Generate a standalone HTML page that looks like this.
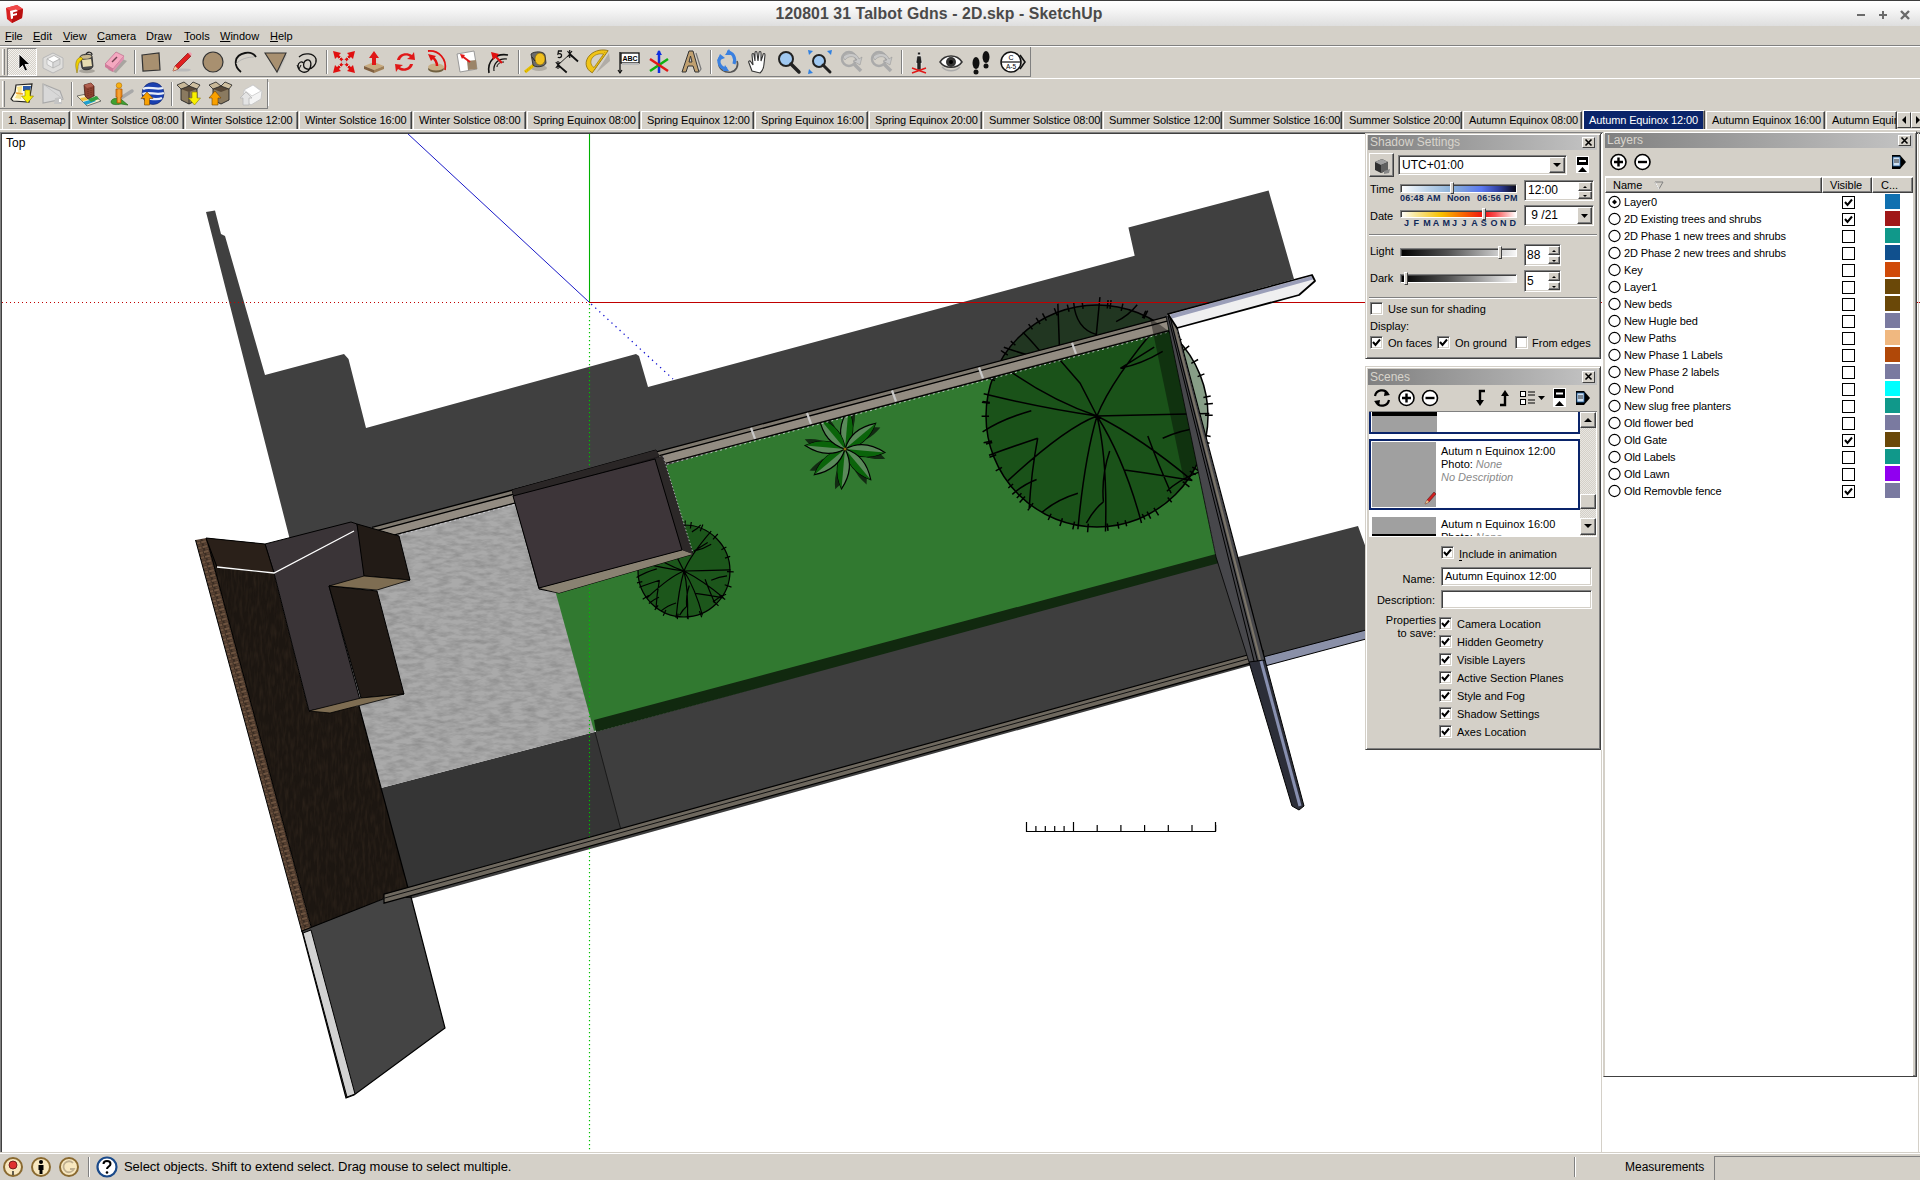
<!DOCTYPE html>
<html><head><meta charset="utf-8"><title>SketchUp</title>
<style>
*{margin:0;padding:0;box-sizing:border-box}
html,body{width:1920px;height:1180px;overflow:hidden;background:#d4d0c8;font-family:"Liberation Sans",sans-serif;font-size:11px;color:#000}
#root{position:relative;width:1920px;height:1180px;overflow:hidden}
.abs{position:absolute}
#titlebar{position:absolute;left:0;top:0;width:1920px;height:26px;background:linear-gradient(#ffffff 0%,#f4f4f4 40%,#dedede 100%);border-top:1px solid #3c3c3c}
#titlebar .t{position:absolute;left:0;width:1878px;top:4px;text-align:center;font-weight:bold;font-size:15.8px;color:#4a4a4a;letter-spacing:0.1px}
#menubar{position:absolute;left:0;top:26px;width:1920px;height:19px;background:#d4d0c8}
#menubar span{position:absolute;top:4px;font-size:11px}
#menubar u{text-decoration:underline;text-underline-offset:1px}
.sep1{position:absolute;left:0;top:45px;width:1920px;height:1px;background:#808080}
.sep1b{position:absolute;left:0;top:46px;width:1920px;height:1px;background:#fff}
.tb{position:absolute;background:#d4d0c8}
.grip{position:absolute;width:3px;border-left:1px solid #fff;border-right:1px solid #808080}
.vsep{position:absolute;width:2px;border-left:1px solid #808080;border-right:1px solid #fff}
.ico{position:absolute;width:26px;height:26px}
#tabs{position:absolute;left:0;top:110px;width:1920px;height:21px}
.tab{position:absolute;top:1px;height:18px;border-top:1px solid #fff;border-left:1px solid #fff;border-right:1px solid #404040;box-shadow:inset -1px 0 0 #808080;font-size:11px;line-height:16px;white-space:nowrap;overflow:hidden;padding-left:5px;background:#d4d0c8;letter-spacing:-0.12px}
.tab.act{background:#0a246a;color:#fff;top:0;height:20px;line-height:18px}
#viewport{position:absolute;left:0;top:132px;width:1920px;height:1020px;background:#fff;border-top:1px solid #808080;border-left:1px solid #808080;overflow:hidden}
.panel{position:absolute;background:#d4d0c8;border:1px solid #d4d0c8;box-shadow:inset -1px -1px 0 #404040, inset 1px 1px 0 #fff, inset -2px -2px 0 #808080}
.ptitle{position:absolute;height:16px;background:linear-gradient(90deg,#808080,#c0c0c0);color:#d4d0c8;font-size:12px;line-height:16px;padding-left:3px}
.pclose{position:absolute;width:14px;height:12px;background:#d4d0c8;border:1px solid;border-color:#fff #404040 #404040 #fff;font-size:11px;line-height:10px;text-align:center;font-weight:bold}
.inp{position:absolute;background:#fff;border:1px solid;border-color:#808080 #fff #fff #808080;box-shadow:inset 1px 1px 0 #404040}
.cb{position:absolute;width:13px;height:13px;background:#fff;border:1px solid;border-color:#808080 #fff #fff #808080;box-shadow:inset 1px 1px 0 #404040}
.lbl{position:absolute;font-size:11px;white-space:nowrap}
#status{position:absolute;left:0;top:1153px;width:1920px;height:27px;background:#d4d0c8;border-top:1px solid #fff}

</style></head><body>
<div id="root">
<div id="titlebar"><svg class="abs" style="left:3px;top:2px" width="22" height="22" viewBox="0 0 22 22"><path d="M3 5 L14 2 L20 6 L19 15 L9 20 L4 16 Z" fill="#d82020"/><path d="M3 5 L14 2 L20 6 L9 9Z" fill="#f04848"/><path d="M9 9 L20 6 L19 15 L9 20Z" fill="#b81010"/><path d="M7 8 L13 6.5 L15 8 L10 9.5 L10 11 L14 10 L14 12 L10 13 L10 15.5 L8 16Z" fill="#fff"/></svg><div class="t">120801 31 Talbot Gdns - 2D.skp - SketchUp</div><svg class="abs" style="left:1856px;top:8px" width="60" height="12" viewBox="0 0 60 12"><rect x="1" y="5" width="8" height="2" fill="#6a6a6a"/><rect x="23" y="5" width="8" height="2" fill="#6a6a6a"/><rect x="26" y="2" width="2" height="8" fill="#6a6a6a"/><path d="M45 2 L53 10 M53 2 L45 10" stroke="#6a6a6a" stroke-width="2.4"/></svg></div>
<div id="menubar">
<span style="left:5px"><u>F</u>ile</span>
<span style="left:33px"><u>E</u>dit</span>
<span style="left:63px"><u>V</u>iew</span>
<span style="left:97px"><u>C</u>amera</span>
<span style="left:146px">Dr<u>a</u>w</span>
<span style="left:184px"><u>T</u>ools</span>
<span style="left:220px"><u>W</u>indow</span>
<span style="left:270px"><u>H</u>elp</span>
</div><div class="sep1"></div><div class="sep1b"></div>
<div class="abs" style="left:0;top:47px;width:1031px;height:30px;border-right:1px solid #808080;border-bottom:1px solid #808080"></div>
<div class="abs" style="left:0;top:78px;width:1920px;height:1px;background:#fff"></div>
<div class="abs" style="left:0;top:79px;width:268px;height:30px;border-right:1px solid #808080;border-bottom:1px solid #808080"></div>
<div class="grip" style="left:2px;top:49px;height:26px"></div>
<div class="grip" style="left:2px;top:81px;height:26px"></div>
<div class="vsep" style="left:134px;top:50px;height:24px"></div>
<div class="vsep" style="left:326px;top:50px;height:24px"></div>
<div class="vsep" style="left:518px;top:50px;height:24px"></div>
<div class="vsep" style="left:710px;top:50px;height:24px"></div>
<div class="vsep" style="left:901px;top:50px;height:24px"></div>
<div class="vsep" style="left:71px;top:82px;height:24px"></div>
<div class="vsep" style="left:171px;top:82px;height:24px"></div>
<div class="vsep" style="left:267px;top:82px;height:24px"></div>
<div class="abs" style="left:7px;top:48px;width:30px;height:28px;border:1px solid;border-color:#808080 #fff #fff #808080;background-color:#d4d0c8;background-image:linear-gradient(45deg,#f4f2ee 25%,transparent 25%,transparent 75%,#f4f2ee 75%),linear-gradient(45deg,#f4f2ee 25%,transparent 25%,transparent 75%,#f4f2ee 75%);background-size:2px 2px;background-position:0 0,1px 1px"></div><svg class="abs" style="left:0;top:0" width="1040" height="112" viewBox="0 0 1040 112">
<g transform="translate(9,49)"><path d="M10 5 L10 20 L13.5 16.5 L16 22 L18.5 21 L16 15.5 L21 15.5 Z" fill="#000" stroke="#fff" stroke-width="0.8"/></g>
<g transform="translate(40,49)"><path d="M3 9 L13 4 L23 9 L23 19 L13 24 L3 19Z" fill="#e4e4e4" fill-opacity="0.7" stroke="#b8b8b8" stroke-width="1"/><path d="M7 10 L14 6.5 L20 10 L13 13.5Z" fill="#fff" stroke="#999" stroke-width="0.6"/><path d="M7 10 L13 13.5 L13 19 L7 15.5Z" fill="#f0f0f0" stroke="#aaa" stroke-width="0.6"/><path d="M13 13.5 L20 10 L20 15.5 L13 19Z" fill="#d8d8d8" stroke="#aaa" stroke-width="0.6"/></g>
<g transform="translate(71,49)"><ellipse cx="16" cy="22" rx="8" ry="2.2" fill="#a8a49c"/><path d="M9 8 C9 5 20 4 21 7 L22 17 C22 21 12 22 11 19Z" fill="#4a4a4a" stroke="#222" stroke-width="0.8"/><path d="M9.5 8 C10 6 20 5 20.5 7.5 C20 10 10 11 9.5 8Z" fill="#c8b890"/><path d="M11 11 L20 10 L21 17 L12 18Z" fill="#e8dcb0"/><path d="M10 8 C6 9 4 13 5 19 L6 24 L7 19 C7 14 9 12 12 10Z" fill="#f0d000" stroke="#806800" stroke-width="0.5"/><path d="M15 5 C17 2 21 3 21 6" fill="none" stroke="#222" stroke-width="1.2"/></g>
<g transform="translate(102,49)"><path d="M6 21 L16 8 L25 12 L14 24Z" fill="#a8a4a0"/><path d="M3 15 L14 3 L22 7 L11 20Z" fill="#f4a8c0" stroke="#b06080" stroke-width="0.6"/><path d="M3 15 L11 20 L11 23 L3 18Z" fill="#d07898"/><path d="M11 20 L22 7 L22 10 L11 23Z" fill="#e090b0"/><path d="M10 13 L15 8" stroke="#704050" stroke-width="1.5"/></g>
<g transform="translate(138,49)"><path d="M4 6 L21 4 L22 21 L5 22 Z" fill="#a89070" stroke="#333" stroke-width="1.2"/></g>
<g transform="translate(169,49)"><ellipse cx="13" cy="21" rx="9" ry="1.6" fill="#bbb"/><path d="M4 22 L6 17 L19 4 L22 7 L9 20 Z" fill="#e02020" stroke="#801010" stroke-width="0.7"/><path d="M4 22 L6 17 L9 20 Z" fill="#f0d0a0"/><path d="M19 4 L22 7 L23 5 L21 3Z" fill="#f0a0b0"/></g>
<g transform="translate(200,49)"><circle cx="13" cy="13" r="10" fill="#a89070" stroke="#333" stroke-width="1.2"/></g>
<g transform="translate(232,49)"><path d="M9 23 C1 17 2 6 13 4 C18 3 22 5 24 8" fill="none" stroke="#111" stroke-width="1.8"/><path d="M4 15 C8 10 16 8 22 8" fill="none" stroke="#aaa" stroke-width="0.8"/></g>
<g transform="translate(263,49)"><path d="M5 6 L24 6 L16 23Z" fill="#b0b0b0" fill-opacity="0.5"/><path d="M2 4 L23 4 L14 23 Z" fill="#a89070" stroke="#333" stroke-width="1.1"/></g>
<g transform="translate(294,49)"><path d="M5 8 C10 3 20 4 22 10 C23 15 18 21 13 20 C8 19 9 12 13 11 C18 10 18 18 14 22 C10 25 4 22 4 17 C4 13 8 12 9 14" fill="none" stroke="#111" stroke-width="1.3"/><path d="M3 16 L5 20 L7 16" fill="none" stroke="#111" stroke-width="1"/></g>
<g transform="translate(331,49)"><path d="M13 13 L6 6 M13 13 L20 6 M13 13 L6 20 M13 13 L20 20" stroke="#e01010" stroke-width="2.5"/><path d="M2 2 L10 4 L4 10Z M24 2 L22 10 L16 4Z M2 24 L4 16 L10 22Z M24 24 L16 22 L22 16Z" fill="#e01010"/><circle cx="13" cy="13" r="2.5" fill="#c8c8c8"/><path d="M10 8 L8 10 M16 8 L18 10 M10 18 L8 16 M16 18 L18 16" stroke="#d0d0d0" stroke-width="1"/></g>
<g transform="translate(361,49)"><path d="M3 17 L13 13 L23 17 L13 21Z" fill="#c8ac80"/><path d="M3 17 L13 21 L13 24 L3 20Z" fill="#806040"/><path d="M13 21 L23 17 L23 20 L13 24Z" fill="#a08058"/><path d="M13 2 L18 9 L15 9 L15 16 L11 16 L11 9 L8 9Z" fill="#e01818"/></g>
<g transform="translate(392,49)"><path d="M5 11 C6 5 14 2 20 6 L22 3 L23 11 L15 10 L18 8 C14 5 9 7 8 11Z" fill="#e01818"/><path d="M21 15 C20 21 12 24 6 20 L4 23 L3 15 L11 16 L8 18 C12 21 17 19 18 15Z" fill="#e01818"/></g>
<g transform="translate(423,49)"><ellipse cx="13" cy="20" rx="8" ry="3.5" fill="#706040"/><ellipse cx="13" cy="18" rx="8" ry="3.5" fill="#c8b088"/><path d="M5 2 C16 1 24 10 22 21" fill="none" stroke="#e01010" stroke-width="1.8"/><path d="M14 17 C14 13 12 10 9 8" fill="none" stroke="#e01010" stroke-width="2.6"/><path d="M5 5 L13 7 L8 12Z" fill="#e01010"/></g>
<g transform="translate(454,49)"><path d="M3 5 L20 2 L23 20 L6 23Z" fill="#fff" stroke="#999" stroke-width="1"/><path d="M13 12 L22 11 L23 20 L14 21Z" fill="#9a8468"/><path d="M16 13 L8 7" stroke="#e01818" stroke-width="2"/><path d="M6 5 L11 6 L8 10Z" fill="#e01818"/></g>
<g transform="translate(485,49)"><path d="M4 24 C2 12 10 4 23 6" fill="none" stroke="#111" stroke-width="1.6"/><path d="M9 22 C8 15 13 9 22 10" fill="none" stroke="#111" stroke-width="1.2"/><path d="M12 18 C12 15 15 13 19 13" fill="none" stroke="#111" stroke-width="1"/><path d="M17 14 L9 6" stroke="#e01010" stroke-width="2.2"/><path d="M6 3 L14 5 L8 11Z" fill="#e01010"/></g>
<g transform="translate(522,49)"><ellipse cx="17" cy="19" rx="8" ry="3" fill="#b0aca4"/><path d="M3 23 L13 15" stroke="#e8c000" stroke-width="3.2"/><path d="M3 23 L13 15" stroke="#806000" stroke-width="0.5" stroke-dasharray="1 2"/><path d="M9 5 C12 2 22 2 23 6 L24 14 C23 18 13 19 11 16Z" fill="#6a6a6a" stroke="#222" stroke-width="0.8"/><ellipse cx="18" cy="10" rx="5" ry="6" fill="#f0c020" stroke="#806000" stroke-width="0.6"/><path d="M10 8 L13 12" stroke="#222" stroke-width="1"/></g>
<g transform="translate(553,49)"><path d="M5 16 L17 5" stroke="#111" stroke-width="0.9"/><path d="M16.7 5 L25 12.5 M5 15.8 L13.7 23.5" stroke="#111" stroke-width="1.8"/><path d="M14.5 2 L19 8 M19 2 L14.5 8 M16.7 1 L16.7 9" stroke="#111" stroke-width="1.2"/><path d="M2.8 13 L7.3 19 M7.3 13 L2.8 19 M5 12 L5 20" stroke="#111" stroke-width="1.2"/><path d="M9 2 L5.5 2 L5 5 C7 4 9 5 8.5 7 C8 9 5.5 9 5 8" fill="none" stroke="#111" stroke-width="1.3"/></g>
<g transform="translate(584,49)"><path d="M25 4 L26 12 L12 24 Z" fill="#b0aca6"/><path d="M24.2 1.7 L8.3 23.8 C1 20 0 12 6 6 C11 1 19 0 24.2 1.7Z" fill="#f0c418" stroke="#8a6a00" stroke-width="0.8"/><path d="M19.5 5 L10 18.5 C6 16 6 11 9 8 C12 5 16 4.5 19.5 5Z" fill="#d4d0c8" stroke="#8a6a00" stroke-width="0.6"/><path d="M21 3 L10.5 21" stroke="#a08000" stroke-width="0.6" stroke-dasharray="1 1.5"/></g>
<g transform="translate(616,49)"><path d="M4 3 L4 24" stroke="#111" stroke-width="1.3"/><path d="M2 21 L4 24 L6 21" fill="none" stroke="#111" stroke-width="1.2"/><rect x="5" y="4" width="18" height="10" fill="#fff" stroke="#111" stroke-width="1.3"/><text x="14" y="12.3" font-size="7" font-weight="bold" text-anchor="middle" font-family="Liberation Sans">ABC</text><rect x="6" y="14" width="17" height="2" fill="#bbb"/></g>
<g transform="translate(646,49)"><path d="M13 2 L13 24" stroke="#1030e0" stroke-width="2.5"/><path d="M4 22 L22 10" stroke="#10b010" stroke-width="2.5"/><path d="M4 10 L22 22" stroke="#e01818" stroke-width="2.5"/><path d="M10 6 L13 1 L16 6Z" fill="#1030e0"/></g>
<g transform="translate(677,49)"><path d="M5 23 L12 2 L16 2 L22 23 L18 23 L16 17 L11 17 L9 23Z M12 13 L15 13 L13.5 7Z" fill="#c0a070" stroke="#333" stroke-width="1" fill-rule="evenodd"/><path d="M22 23 L24 20 L19 4" fill="none" stroke="#777" stroke-width="1.2"/></g>
<g transform="translate(715,49)"><path d="M4 14 C3 20 10 24 16 23 C21 22 24 17 22 12" fill="none" stroke="#555" stroke-width="1.6"/><path d="M6 8 C2 12 4 19 12 20" fill="none" stroke="#3a80e0" stroke-width="3.2"/><path d="M12 3 C18 3 21 9 19 15" fill="none" stroke="#3a80e0" stroke-width="3.2"/><path d="M2 12 L5 5 L10 9Z" fill="#3a80e0"/><path d="M14 0 L17 6 L10 6Z" fill="#3a80e0"/><path d="M10 16 L14 22 L8 22Z" fill="#3a80e0"/></g>
<g transform="translate(745,49)"><path d="M7 22 L4 14 C3 12 5 11 6 13 L8 16 L7 6 C7 4 9 4 9 6 L10 12 L10 4 C10 2 12 2 12 4 L13 12 L14 4 C14 2 16 2 16 4 L16 12 L18 6 C18 4 20 4 20 6 L19 15 C19 19 17 22 15 24Z" fill="#fff" stroke="#333" stroke-width="1.1"/></g>
<g transform="translate(776,49)"><circle cx="10" cy="10" r="7" fill="#a0c8f0" stroke="#222" stroke-width="2"/><path d="M15 15 L23 23" stroke="#222" stroke-width="3.5" stroke-linecap="round"/></g>
<g transform="translate(807,49)"><circle cx="12" cy="12" r="6" fill="#a0c8f0" stroke="#222" stroke-width="2"/><path d="M16 16 L23 23" stroke="#222" stroke-width="3" stroke-linecap="round"/><path d="M1 1 L6 2 L2 6Z M25 1 L24 6 L20 2Z M1 25 L2 20 L6 24Z" fill="#3080e0"/></g>
<g transform="translate(839,49)"><circle cx="10" cy="10" r="7" fill="none" stroke="#aaa" stroke-width="2.5"/><path d="M15 15 L22 22" stroke="#aaa" stroke-width="3.5"/><path d="M4 8 C8 3 18 3 20 10 L23 8 L21 16 L14 12 L18 11 C15 6 9 7 6 11Z" fill="#c8c8c8" stroke="#999" stroke-width="0.6"/></g>
<g transform="translate(869,49)"><circle cx="10" cy="10" r="7" fill="none" stroke="#aaa" stroke-width="2.5"/><path d="M15 15 L22 22" stroke="#aaa" stroke-width="3.5"/><path d="M4 8 C8 3 18 3 20 10 L23 8 L21 16 L14 12 L18 11 C15 6 9 7 6 11Z" fill="#c8c8c8" stroke="#999" stroke-width="0.6"/></g>
<g transform="translate(907,49)"><path d="M12 3 C14 3 14 6 12 6 C10 6 10 3 12 3Z M10 7 L14 7 L15 14 L14 14 L14 21 L10 21 L10 14 L9 14Z" fill="#222" stroke="#fff" stroke-width="0.5"/><path d="M5 19 L19 24 M5 24 L19 19" stroke="#e01818" stroke-width="1.4"/></g>
<g transform="translate(938,49)"><path d="M2 13 C7 5 19 5 24 13 C19 20 7 20 2 13Z" fill="#fff" stroke="#333" stroke-width="1.5"/><circle cx="13" cy="13" r="5" fill="#333"/><circle cx="13" cy="13" r="2" fill="#000"/><path d="M4 18 C9 23 17 23 22 18" fill="none" stroke="#aaa" stroke-width="1.5"/></g>
<g transform="translate(968,49)"><ellipse cx="8" cy="14" rx="3.5" ry="6" fill="#111"/><ellipse cx="8" cy="23" rx="2.5" ry="2.5" fill="#111"/><ellipse cx="18" cy="8" rx="3.5" ry="6" fill="#111"/><ellipse cx="18" cy="17" rx="2.5" ry="2.5" fill="#111"/></g>
<g transform="translate(999,49)"><circle cx="12" cy="13" r="10" fill="#fff" stroke="#111" stroke-width="1.5"/><path d="M2 13 L22 13" stroke="#111" stroke-width="1.2"/><path d="M21 6 L26 13 L21 20" fill="none" stroke="#111" stroke-width="1.6"/><text x="12" y="11" font-size="7" text-anchor="middle" font-family="Liberation Sans">C</text><text x="12" y="20" font-size="6.5" text-anchor="middle" font-family="Liberation Sans">A-5</text></g>
<g transform="translate(9,81)"><path d="M7 4 L23 3 L22 9 L20 21 L4 20 L2 18 L6 11Z" fill="#fffbe8" stroke="#222" stroke-width="1.2"/><path d="M8 6 L13 5 L12 18 L6 17 L9 11Z" fill="#f8e070" fill-opacity="0.8"/><path d="M7 12 L14 13" stroke="#f0a030" stroke-width="1.4"/><path d="M14 5 L22 5 L21 10 L14 10Z" fill="#2a5aa8"/><path d="M16 9 L21 9 L21 15 L24.5 15 L18.5 22 L12.5 15 L16 15Z" fill="#f8f000" stroke="#8a7a00" stroke-width="0.6"/></g>
<g transform="translate(40,81)"><path d="M3 3 L20 10 L23 18 L3 22 Z" fill="#d8d8d8" stroke="#a8a8a8" stroke-width="1.1"/><path d="M3 3 L23 18" stroke="#c0c0c0" stroke-width="0.8"/><path d="M15 17 L21 16 L22 23 L14 23Z" fill="#c4c4c4"/><path d="M19 18 L21 18 L21 21 L19 21Z" fill="#fff"/></g>
<g transform="translate(76,81)"><path d="M1 15 L15 12 L25 20 L11 25Z" fill="#f8f0d0" stroke="#555" stroke-width="0.8"/><path d="M4 17 L10 16 L12 19 L6 20Z" fill="#f0c040"/><path d="M7 21 L17 18 L20 20 L10 24Z" fill="#20a0d0"/><path d="M12 18 L21 15 L23 18 L15 21Z" fill="#30a040"/><path d="M8 4 L15 2 L18 5 L18 15 L12 18 L9 15Z" fill="#8a4030" stroke="#3a1008" stroke-width="0.7"/><path d="M8 4 L15 2 L18 5 L11 7Z" fill="#b06050"/><path d="M12 8 L12 16 M15 7 L15 15" stroke="#5a2010" stroke-width="0.6" stroke-dasharray="1 1"/></g>
<g transform="translate(107,81)"><path d="M14 17 L25 10" stroke="#a8a8a8" stroke-width="3.5" stroke-linecap="round"/><path d="M4 21 C4 17 12 16 15 19 L21 24 L14 23 C10 24 4 24 4 21Z" fill="#40a030" stroke="#206010" stroke-width="0.6"/><circle cx="12" cy="4.5" r="2.8" fill="#f8b010" stroke="#a06000" stroke-width="0.5"/><path d="M9 8 L15 8 L15 16 L14 16 L14 22 L10 22 L10 16 L9 16Z" fill="#f09020" stroke="#a05000" stroke-width="0.7"/><path d="M12 8 L12 21" stroke="#f8c060" stroke-width="0.8"/></g>
<g transform="translate(139,81)"><circle cx="14" cy="12.5" r="11" fill="#1a40b0" stroke="#102060" stroke-width="0.6"/><path d="M4 8 C9 5 17 9 24 7 M3.5 13 C10 10 17 15 25 12 M6 19 C11 16 17 20 23 17" fill="none" stroke="#e8eef8" stroke-width="2.3"/><path d="M8 11 L14 17.5 L10.5 17.5 L10.5 24 L5.5 24 L5.5 17.5 L2 17.5Z" fill="#f8a000" stroke="#704000" stroke-width="0.6"/></g>
<g transform="translate(176,81)"><path d="M5 8 L13 5 L21 8 L21 19 L13 23 L5 19Z" fill="#8a7a60" stroke="#222" stroke-width="0.9"/><path d="M5 8 L13 11 L21 8 L13 5Z" fill="#5a4a38"/><path d="M5 8 L1 4 L8 1 L13 5Z" fill="#c8b898" stroke="#222" stroke-width="0.8"/><path d="M13 5 L17 1 L24 4 L21 8Z" fill="#d0c0a0" stroke="#222" stroke-width="0.8"/><path d="M13 11 L13 23" stroke="#222" stroke-width="0.8"/><path d="M16 11 L21 11 L21 17 L24.5 17 L18.5 24 L12.5 17 L16 17Z" fill="#f8f000" stroke="#8a7a00" stroke-width="0.6"/></g>
<g transform="translate(207,81)"><path d="M6 8 L14 5 L22 8 L22 19 L14 23 L6 19Z" fill="#8a7a60" stroke="#222" stroke-width="0.9"/><path d="M6 8 L14 11 L22 8 L14 5Z" fill="#5a4a38"/><path d="M6 8 L2 4 L9 1 L14 5Z" fill="#c8b898" stroke="#222" stroke-width="0.8"/><path d="M14 5 L18 1 L25 4 L22 8Z" fill="#d0c0a0" stroke="#222" stroke-width="0.8"/><path d="M8 10 L14 17 L11 17 L11 24 L5 24 L5 17 L2 17Z" fill="#f8a000" stroke="#704000" stroke-width="0.6"/></g>
<g transform="translate(237,81)"><path d="M7 9 L16 4 L25 10 L24 18 L14 24 L6 19Z" fill="#f4f4f4" stroke="#c8c8c8" stroke-width="1"/><path d="M7 9 L16 4 L24 10 L15 15Z" fill="#fff" stroke="#c8c8c8" stroke-width="0.8"/><path d="M9 11 L15 17 L12 17 L12 24 L6 24 L6 17 L3 17Z" fill="#e4e4e4" stroke="#b8b8b8" stroke-width="0.8"/></g>
</svg><div id="tabs">
<div class="tab" style="left:2px;width:68px">1. Basemap</div>
<div class="tab" style="left:71px;width:113px">Winter Solstice 08:00</div>
<div class="tab" style="left:185px;width:113px">Winter Solstice 12:00</div>
<div class="tab" style="left:299px;width:113px">Winter Solstice 16:00</div>
<div class="tab" style="left:413px;width:113px">Winter Solstice 08:00</div>
<div class="tab" style="left:527px;width:113px">Spring Equinox 08:00</div>
<div class="tab" style="left:641px;width:113px">Spring Equinox 12:00</div>
<div class="tab" style="left:755px;width:113px">Spring Equinox 16:00</div>
<div class="tab" style="left:869px;width:113px">Spring Equinox 20:00</div>
<div class="tab" style="left:983px;width:119px">Summer Solstice 08:00</div>
<div class="tab" style="left:1103px;width:119px">Summer Solstice 12:00</div>
<div class="tab" style="left:1223px;width:119px">Summer Solstice 16:00</div>
<div class="tab" style="left:1343px;width:119px">Summer Solstice 20:00</div>
<div class="tab" style="left:1463px;width:119px">Autumn Equinox 08:00</div>
<div class="tab act" style="left:1583px;width:122px">Autumn Equinox 12:00</div>
<div class="tab" style="left:1706px;width:119px">Autumn Equinox 16:00</div>
<div class="tab" style="left:1826px;width:71px">Autumn Equinox 20:00</div>
<div class="abs" style="left:1897px;top:2px;width:14px;height:16px;border:1px solid;border-color:#fff #404040 #404040 #fff;background:#d4d0c8"><svg width="12" height="14"><path d="M4 7 L8 3 L8 11Z" fill="#000"/></svg></div>
<div class="abs" style="left:1911px;top:2px;width:14px;height:16px;border:1px solid;border-color:#fff #404040 #404040 #fff;background:#d4d0c8"><svg width="12" height="14"><path d="M4 3 L8 7 L4 11Z" fill="#000"/></svg></div>
<div class="abs" style="left:0;top:19px;width:1920px;height:1px;background:#fff"></div>
</div>
<div id="viewport"><svg style="position:absolute;left:-1px;top:-133px" width="1920" height="1180" viewBox="0 0 1920 1180" shape-rendering="geometricPrecision">
<defs>
<filter id="noise" x="0" y="0" width="100%" height="100%" color-interpolation-filters="sRGB"><feTurbulence type="fractalNoise" baseFrequency="0.08 0.25" numOctaves="3" seed="4" result="n"/><feColorMatrix in="n" type="matrix" values="0 0 0 0 0  0 0 0 0 0  0 0 0 0 0  0.3 0 0 0 -0.105" result="a"/><feComposite in="a" in2="SourceGraphic" operator="in" result="b"/><feMerge><feMergeNode in="SourceGraphic"/><feMergeNode in="b"/></feMerge></filter>
<filter id="noise2" x="0" y="0" width="100%" height="100%" color-interpolation-filters="sRGB"><feTurbulence type="fractalNoise" baseFrequency="0.35 0.08" numOctaves="2" seed="9" result="n"/><feColorMatrix in="n" type="matrix" values="0 0 0 0 0.35  0 0 0 0 0.27  0 0 0 0 0.2  0.5 0 0 0 -0.2" result="a"/><feComposite in="a" in2="SourceGraphic" operator="in" result="b"/><feMerge><feMergeNode in="SourceGraphic"/><feMergeNode in="b"/></feMerge></filter>
<pattern id="brick" width="6" height="5" patternUnits="userSpaceOnUse" patternTransform="rotate(-15)"><rect width="6" height="5" fill="#3a2c22"/><rect x="0" y="0" width="5" height="2" fill="#6e5440"/><rect x="2" y="2.5" width="4" height="2" fill="#5c4434"/></pattern>
</defs>
<polygon points="206,212 215,210.5 221,234 225,236 265,375 344,354 348.5,359 366,428 636,354 639,356 648,387 1134.7,255.8 1128.4,227.6 1268.6,190.6 1294,279 1168,314 1160,340 700,475 360,565 290,540" fill="#404040"/>
<polygon points="370,792 595,732 1216,562 1238,557 1358,526 1366,548 1366,634 1263,662 392,904 380,880" fill="#3e3e3e"/>
<polygon points="381,788 595,732 621,830 405,893" fill="#353535"/>
<line x1="595" y1="732" x2="621" y2="830" stroke="#1a1a1a" stroke-width="1"/>
<polygon points="355,545 512,492 539,589 559,593 595,732 381,788 340,640" fill="#aaaaaa" filter="url(#noise)"/>
<polygon points="650,470 1168,320 1216,557 594,731 555,590" fill="#317930"/>
<polygon points="594,720 1216,554 1219,563 596,732" fill="#11290f"/>
<circle cx="684" cy="571" r="46" fill="#1c561b" stroke="#000" stroke-width="1.2"/>
<clipPath id="c5_684"><circle cx="684" cy="571" r="54"/></clipPath>
<path d="M684.0 571.0 L702.4 570.6 L721.3 570.1 L730.5 569.9 M684.0 571.0 Q662.1 567.9 637.0 561.8 M684.0 571.0 L677.0 557.4 L668.6 547.7 L667.8 524.0 M684.0 571.0 Q690.1 555.6 711.2 531.1 M684.0 571.0 Q664.7 564.4 646.3 551.2 M684.0 571.0 Q670.8 575.8 647.1 597.8 M684.0 571.0 Q678.7 589.0 676.1 618.0 M684.0 571.0 Q688.4 589.0 687.5 618.8 M684.0 571.0 Q695.4 589.0 702.4 615.3 M684.0 571.0 Q702.4 580.2 723.5 597.8 M683.6 539.0 Q684.4 529.3 685.3 520.5 M659.4 580.2 Q656.8 594.3 655.9 609.2 M639.2 587.2 Q648.9 583.7 659.4 580.2 M648.9 603.5 Q653.3 599.5 659.0 597.3 M661.2 610.9 Q667.3 605.7 676.1 603.0 M689.3 585.5 Q685.8 596.0 686.6 606.6 M695.4 593.4 Q708.6 595.1 723.5 597.8 M705.1 579.3 Q708.6 589.0 714.7 603.0 M636.6 577.6 Q644.5 572.3 656.8 568.8 M645.4 542.5 Q657.7 546.9 666.4 548.6 M674.3 524.0 Q675.2 534.6 683.6 537.2 M691.9 531.9 Q697.2 529.3 700.7 524.9 M707.7 542.5 Q700.7 546.9 693.7 551.2 M693.7 551.2 Q702.4 549.5 711.2 544.2 M679.6 615.3 Q683.1 609.2 686.6 606.6 M711.2 580.2 Q719.1 576.7 727.0 575.8 M713.0 602.2 Q717.4 597.8 726.1 594.3 M653.3 536.3 Q658.5 541.6 664.7 549.5 M727.0 571.7 L733.7 571.9 M724.7 584.8 L731.5 587.1 M719.4 595.4 L725.2 599.5 M714.2 601.6 L718.5 605.9 M699.4 611.1 L701.7 617.2 M687.7 613.8 L688.2 619.2 M678.1 613.6 L677.3 619.2 M665.9 610.0 L663.2 615.7 M658.1 605.3 L654.8 609.8 M648.6 595.4 L642.7 599.3 M642.3 581.6 L637.0 582.9 M641.0 569.2 L635.6 569.0 M642.9 558.2 L637.8 556.6 M646.3 550.3 L640.2 547.0 M654.5 539.7 L650.7 535.6 M668.8 530.8 L666.4 524.3 M676.6 528.6 L675.4 521.6 M690.4 528.5 L691.3 522.0 M700.2 531.2 L702.9 524.6 M713.0 539.3 L717.8 534.0 M721.4 549.8 L726.4 546.9 M725.0 558.1 L730.2 556.4" fill="none" stroke="#000" stroke-width="1.2" clip-path="url(#c5_684)"/>
<clipPath id="c_lawn"><polygon points="650,463 1168,318 1216,557 594,731 555,590"/></clipPath>
<clipPath id="c_shadow"><polygon points="900,200 1300,200 1168,316 1168,318 650,458 650,300"/></clipPath>
<clipPath id="c_right"><polygon points="1173,314 1400,250 1400,700 1265,660"/></clipPath>
<clipPath id="c_wallsh"><polygon points="1150,320 1168,316 1249,662 1222,662"/></clipPath>
<g clip-path="url(#c_lawn)"><circle cx="1097" cy="416" r="111" fill="#1a5219" stroke="#000" stroke-width="1.5"/>
<clipPath id="c11_1097"><circle cx="1097" cy="416" r="119"/></clipPath>
<path d="M1097.0 416.0 L1141.5 414.9 L1187.0 413.9 L1209.3 413.5 M1097.0 416.0 Q1044.0 408.6 983.7 393.8 M1097.0 416.0 L1080.1 383.2 L1059.9 359.9 L1057.8 302.7 M1097.0 416.0 Q1111.8 378.9 1162.7 319.6 M1097.0 416.0 Q1050.4 400.1 1005.9 368.3 M1097.0 416.0 Q1065.2 427.7 1008.0 480.6 M1097.0 416.0 Q1084.3 459.4 1077.9 529.3 M1097.0 416.0 Q1107.6 459.4 1105.5 531.4 M1097.0 416.0 Q1124.5 459.4 1141.5 523.0 M1097.0 416.0 Q1141.5 438.2 1192.3 480.6 M1095.9 338.7 Q1098.1 315.4 1100.2 294.2 M1037.7 438.2 Q1031.3 472.1 1029.2 508.1 M989.0 455.2 Q1012.3 446.7 1037.7 438.2 M1012.3 494.4 Q1022.9 484.8 1036.6 479.5 M1041.9 512.4 Q1056.8 499.7 1077.9 493.3 M1109.7 451.0 Q1101.2 476.4 1103.4 501.8 M1124.5 470.0 Q1156.3 474.3 1192.3 480.6 M1147.8 436.1 Q1156.3 459.4 1171.1 493.3 M982.6 431.9 Q1001.7 419.2 1031.3 410.7 M1003.8 347.2 Q1033.5 357.7 1054.6 362.0 M1073.7 302.7 Q1075.8 328.1 1095.9 334.4 M1116.1 321.7 Q1128.8 315.4 1137.2 304.8 M1154.2 347.2 Q1137.2 357.7 1120.3 368.3 M1120.3 368.3 Q1141.5 364.1 1162.7 351.4 M1086.4 523.0 Q1094.9 508.1 1103.4 501.8 M1162.7 438.2 Q1181.7 429.8 1200.8 427.7 M1166.9 491.2 Q1177.5 480.6 1198.7 472.1 M1022.9 332.3 Q1035.6 345.0 1050.4 364.1 M1205.0 415.3 L1212.7 415.2 M1203.3 435.1 L1210.6 436.4 M1202.0 441.5 L1209.5 443.3 M1199.8 449.1 L1207.0 451.4 M1192.2 467.1 L1199.6 471.0 M1189.8 471.2 L1195.8 474.7 M1182.7 481.7 L1189.4 486.9 M1167.7 497.6 L1171.7 502.3 M1153.9 507.8 L1158.6 515.4 M1147.1 511.7 L1150.7 518.6 M1142.3 514.0 L1144.9 519.5 M1125.1 520.3 L1126.7 526.3 M1117.5 522.0 L1118.8 528.6 M1107.3 523.5 L1108.0 530.9 M1088.3 523.6 L1087.6 532.2 M1074.5 521.6 L1072.8 529.4 M1062.4 518.3 L1059.9 525.9 M1051.1 513.8 L1048.2 520.0 M1033.1 503.1 L1027.8 510.4 M1025.0 496.5 L1019.6 502.6 M1021.5 493.2 L1016.8 498.0 M1013.1 484.0 L1008.3 488.0 M1002.0 467.4 L995.7 470.9 M996.2 454.7 L989.5 457.3 M991.9 440.9 L983.6 442.8 M992.3 442.5 L985.9 444.1 M989.0 416.2 L981.6 416.2 M989.9 402.4 L982.7 401.5 M989.8 403.3 L981.9 402.3 M995.0 380.5 L988.6 378.2 M995.8 378.2 L989.3 375.8 M1007.8 355.2 L1000.9 350.5 M1007.8 355.1 L1002.2 351.3 M1015.4 345.2 L1010.8 341.1 M1032.5 329.4 L1028.6 324.1 M1040.1 324.2 L1036.2 317.9 M1046.4 320.6 L1042.5 313.3 M1057.2 315.6 L1054.3 308.2 M1069.1 311.7 L1067.3 304.6 M1083.1 308.9 L1082.2 302.1 M1107.3 308.5 L1108.1 300.1 M1110.0 308.8 L1111.1 300.2 M1121.2 310.8 L1122.9 303.7 M1142.5 318.0 L1145.8 310.8 M1143.8 318.7 L1147.7 310.6 M1156.4 325.8 L1160.1 320.1 M1172.9 339.1 L1177.8 334.2 M1176.8 343.2 L1181.4 339.0 M1183.0 350.6 L1189.2 345.9 M1191.3 363.3 L1198.1 359.5 M1197.6 376.6 L1204.4 373.9 M1203.4 397.4 L1210.7 396.1 M1204.4 404.3 L1212.9 403.4" fill="none" stroke="#000" stroke-width="1.5" clip-path="url(#c11_1097)"/></g>
<g clip-path="url(#c_shadow)"><circle cx="1097" cy="416" r="111" fill="#213621" stroke="#000" stroke-width="1.5"/>
<clipPath id="c11_1097"><circle cx="1097" cy="416" r="119"/></clipPath>
<path d="M1097.0 416.0 L1141.5 414.9 L1187.0 413.9 L1209.3 413.5 M1097.0 416.0 Q1044.0 408.6 983.7 393.8 M1097.0 416.0 L1080.1 383.2 L1059.9 359.9 L1057.8 302.7 M1097.0 416.0 Q1111.8 378.9 1162.7 319.6 M1097.0 416.0 Q1050.4 400.1 1005.9 368.3 M1097.0 416.0 Q1065.2 427.7 1008.0 480.6 M1097.0 416.0 Q1084.3 459.4 1077.9 529.3 M1097.0 416.0 Q1107.6 459.4 1105.5 531.4 M1097.0 416.0 Q1124.5 459.4 1141.5 523.0 M1097.0 416.0 Q1141.5 438.2 1192.3 480.6 M1095.9 338.7 Q1098.1 315.4 1100.2 294.2 M1037.7 438.2 Q1031.3 472.1 1029.2 508.1 M989.0 455.2 Q1012.3 446.7 1037.7 438.2 M1012.3 494.4 Q1022.9 484.8 1036.6 479.5 M1041.9 512.4 Q1056.8 499.7 1077.9 493.3 M1109.7 451.0 Q1101.2 476.4 1103.4 501.8 M1124.5 470.0 Q1156.3 474.3 1192.3 480.6 M1147.8 436.1 Q1156.3 459.4 1171.1 493.3 M982.6 431.9 Q1001.7 419.2 1031.3 410.7 M1003.8 347.2 Q1033.5 357.7 1054.6 362.0 M1073.7 302.7 Q1075.8 328.1 1095.9 334.4 M1116.1 321.7 Q1128.8 315.4 1137.2 304.8 M1154.2 347.2 Q1137.2 357.7 1120.3 368.3 M1120.3 368.3 Q1141.5 364.1 1162.7 351.4 M1086.4 523.0 Q1094.9 508.1 1103.4 501.8 M1162.7 438.2 Q1181.7 429.8 1200.8 427.7 M1166.9 491.2 Q1177.5 480.6 1198.7 472.1 M1022.9 332.3 Q1035.6 345.0 1050.4 364.1 M1205.0 415.3 L1212.7 415.2 M1203.3 435.1 L1210.6 436.4 M1202.0 441.5 L1209.5 443.3 M1199.8 449.1 L1207.0 451.4 M1192.2 467.1 L1199.6 471.0 M1189.8 471.2 L1195.8 474.7 M1182.7 481.7 L1189.4 486.9 M1167.7 497.6 L1171.7 502.3 M1153.9 507.8 L1158.6 515.4 M1147.1 511.7 L1150.7 518.6 M1142.3 514.0 L1144.9 519.5 M1125.1 520.3 L1126.7 526.3 M1117.5 522.0 L1118.8 528.6 M1107.3 523.5 L1108.0 530.9 M1088.3 523.6 L1087.6 532.2 M1074.5 521.6 L1072.8 529.4 M1062.4 518.3 L1059.9 525.9 M1051.1 513.8 L1048.2 520.0 M1033.1 503.1 L1027.8 510.4 M1025.0 496.5 L1019.6 502.6 M1021.5 493.2 L1016.8 498.0 M1013.1 484.0 L1008.3 488.0 M1002.0 467.4 L995.7 470.9 M996.2 454.7 L989.5 457.3 M991.9 440.9 L983.6 442.8 M992.3 442.5 L985.9 444.1 M989.0 416.2 L981.6 416.2 M989.9 402.4 L982.7 401.5 M989.8 403.3 L981.9 402.3 M995.0 380.5 L988.6 378.2 M995.8 378.2 L989.3 375.8 M1007.8 355.2 L1000.9 350.5 M1007.8 355.1 L1002.2 351.3 M1015.4 345.2 L1010.8 341.1 M1032.5 329.4 L1028.6 324.1 M1040.1 324.2 L1036.2 317.9 M1046.4 320.6 L1042.5 313.3 M1057.2 315.6 L1054.3 308.2 M1069.1 311.7 L1067.3 304.6 M1083.1 308.9 L1082.2 302.1 M1107.3 308.5 L1108.1 300.1 M1110.0 308.8 L1111.1 300.2 M1121.2 310.8 L1122.9 303.7 M1142.5 318.0 L1145.8 310.8 M1143.8 318.7 L1147.7 310.6 M1156.4 325.8 L1160.1 320.1 M1172.9 339.1 L1177.8 334.2 M1176.8 343.2 L1181.4 339.0 M1183.0 350.6 L1189.2 345.9 M1191.3 363.3 L1198.1 359.5 M1197.6 376.6 L1204.4 373.9 M1203.4 397.4 L1210.7 396.1 M1204.4 404.3 L1212.9 403.4" fill="none" stroke="#000" stroke-width="1.5" clip-path="url(#c11_1097)"/></g>
<g clip-path="url(#c_right)"><circle cx="1097" cy="416" r="111" fill="#879e87" stroke="#000" stroke-width="1.5"/>
<clipPath id="c11_1097"><circle cx="1097" cy="416" r="119"/></clipPath>
<path d="M1097.0 416.0 L1141.5 414.9 L1187.0 413.9 L1209.3 413.5 M1097.0 416.0 Q1044.0 408.6 983.7 393.8 M1097.0 416.0 L1080.1 383.2 L1059.9 359.9 L1057.8 302.7 M1097.0 416.0 Q1111.8 378.9 1162.7 319.6 M1097.0 416.0 Q1050.4 400.1 1005.9 368.3 M1097.0 416.0 Q1065.2 427.7 1008.0 480.6 M1097.0 416.0 Q1084.3 459.4 1077.9 529.3 M1097.0 416.0 Q1107.6 459.4 1105.5 531.4 M1097.0 416.0 Q1124.5 459.4 1141.5 523.0 M1097.0 416.0 Q1141.5 438.2 1192.3 480.6 M1095.9 338.7 Q1098.1 315.4 1100.2 294.2 M1037.7 438.2 Q1031.3 472.1 1029.2 508.1 M989.0 455.2 Q1012.3 446.7 1037.7 438.2 M1012.3 494.4 Q1022.9 484.8 1036.6 479.5 M1041.9 512.4 Q1056.8 499.7 1077.9 493.3 M1109.7 451.0 Q1101.2 476.4 1103.4 501.8 M1124.5 470.0 Q1156.3 474.3 1192.3 480.6 M1147.8 436.1 Q1156.3 459.4 1171.1 493.3 M982.6 431.9 Q1001.7 419.2 1031.3 410.7 M1003.8 347.2 Q1033.5 357.7 1054.6 362.0 M1073.7 302.7 Q1075.8 328.1 1095.9 334.4 M1116.1 321.7 Q1128.8 315.4 1137.2 304.8 M1154.2 347.2 Q1137.2 357.7 1120.3 368.3 M1120.3 368.3 Q1141.5 364.1 1162.7 351.4 M1086.4 523.0 Q1094.9 508.1 1103.4 501.8 M1162.7 438.2 Q1181.7 429.8 1200.8 427.7 M1166.9 491.2 Q1177.5 480.6 1198.7 472.1 M1022.9 332.3 Q1035.6 345.0 1050.4 364.1 M1205.0 415.3 L1212.7 415.2 M1203.3 435.1 L1210.6 436.4 M1202.0 441.5 L1209.5 443.3 M1199.8 449.1 L1207.0 451.4 M1192.2 467.1 L1199.6 471.0 M1189.8 471.2 L1195.8 474.7 M1182.7 481.7 L1189.4 486.9 M1167.7 497.6 L1171.7 502.3 M1153.9 507.8 L1158.6 515.4 M1147.1 511.7 L1150.7 518.6 M1142.3 514.0 L1144.9 519.5 M1125.1 520.3 L1126.7 526.3 M1117.5 522.0 L1118.8 528.6 M1107.3 523.5 L1108.0 530.9 M1088.3 523.6 L1087.6 532.2 M1074.5 521.6 L1072.8 529.4 M1062.4 518.3 L1059.9 525.9 M1051.1 513.8 L1048.2 520.0 M1033.1 503.1 L1027.8 510.4 M1025.0 496.5 L1019.6 502.6 M1021.5 493.2 L1016.8 498.0 M1013.1 484.0 L1008.3 488.0 M1002.0 467.4 L995.7 470.9 M996.2 454.7 L989.5 457.3 M991.9 440.9 L983.6 442.8 M992.3 442.5 L985.9 444.1 M989.0 416.2 L981.6 416.2 M989.9 402.4 L982.7 401.5 M989.8 403.3 L981.9 402.3 M995.0 380.5 L988.6 378.2 M995.8 378.2 L989.3 375.8 M1007.8 355.2 L1000.9 350.5 M1007.8 355.1 L1002.2 351.3 M1015.4 345.2 L1010.8 341.1 M1032.5 329.4 L1028.6 324.1 M1040.1 324.2 L1036.2 317.9 M1046.4 320.6 L1042.5 313.3 M1057.2 315.6 L1054.3 308.2 M1069.1 311.7 L1067.3 304.6 M1083.1 308.9 L1082.2 302.1 M1107.3 308.5 L1108.1 300.1 M1110.0 308.8 L1111.1 300.2 M1121.2 310.8 L1122.9 303.7 M1142.5 318.0 L1145.8 310.8 M1143.8 318.7 L1147.7 310.6 M1156.4 325.8 L1160.1 320.1 M1172.9 339.1 L1177.8 334.2 M1176.8 343.2 L1181.4 339.0 M1183.0 350.6 L1189.2 345.9 M1191.3 363.3 L1198.1 359.5 M1197.6 376.6 L1204.4 373.9 M1203.4 397.4 L1210.7 396.1 M1204.4 404.3 L1212.9 403.4" fill="none" stroke="#000" stroke-width="1.5" clip-path="url(#c11_1097)"/></g>
<g transform="rotate(22 845 449)"><path d="M845 449 Q834 433 845 412 Q856 433 845 449Z" fill="#122a12" transform="translate(-6,-4)"/></g>
<g transform="rotate(67 845 449)"><path d="M845 449 Q834 433 845 412 Q856 433 845 449Z" fill="#122a12" transform="translate(-6,-4)"/></g>
<g transform="rotate(112 845 449)"><path d="M845 449 Q834 433 845 412 Q856 433 845 449Z" fill="#122a12" transform="translate(-6,-4)"/></g>
<g transform="rotate(157 845 449)"><path d="M845 449 Q834 433 845 412 Q856 433 845 449Z" fill="#122a12" transform="translate(-6,-4)"/></g>
<g transform="rotate(202 845 449)"><path d="M845 449 Q834 433 845 412 Q856 433 845 449Z" fill="#122a12" transform="translate(-6,-4)"/></g>
<g transform="rotate(247 845 449)"><path d="M845 449 Q834 433 845 412 Q856 433 845 449Z" fill="#122a12" transform="translate(-6,-4)"/></g>
<g transform="rotate(292 845 449)"><path d="M845 449 Q834 433 845 412 Q856 433 845 449Z" fill="#122a12" transform="translate(-6,-4)"/></g>
<g transform="rotate(337 845 449)"><path d="M845 449 Q834 433 845 412 Q856 433 845 449Z" fill="#122a12" transform="translate(-6,-4)"/></g>
<g transform="rotate(5 845 449)"><path d="M845 449 Q833 431 845 409 Q857 431 845 449Z" fill="#5a8a5a" stroke="#000" stroke-width="1.2"/><path d="M845 449 Q845 430 845 409 Q857 431 845 449Z" fill="#0a640a"/></g>
<g transform="rotate(50 845 449)"><path d="M845 449 Q833 431 845 409 Q857 431 845 449Z" fill="#5a8a5a" stroke="#000" stroke-width="1.2"/><path d="M845 449 Q845 430 845 409 Q857 431 845 449Z" fill="#0a640a"/></g>
<g transform="rotate(95 845 449)"><path d="M845 449 Q833 431 845 409 Q857 431 845 449Z" fill="#5a8a5a" stroke="#000" stroke-width="1.2"/><path d="M845 449 Q845 430 845 409 Q857 431 845 449Z" fill="#0a640a"/></g>
<g transform="rotate(140 845 449)"><path d="M845 449 Q833 431 845 409 Q857 431 845 449Z" fill="#5a8a5a" stroke="#000" stroke-width="1.2"/><path d="M845 449 Q845 430 845 409 Q857 431 845 449Z" fill="#0a640a"/></g>
<g transform="rotate(185 845 449)"><path d="M845 449 Q833 431 845 409 Q857 431 845 449Z" fill="#5a8a5a" stroke="#000" stroke-width="1.2"/><path d="M845 449 Q845 430 845 409 Q857 431 845 449Z" fill="#0a640a"/></g>
<g transform="rotate(230 845 449)"><path d="M845 449 Q833 431 845 409 Q857 431 845 449Z" fill="#5a8a5a" stroke="#000" stroke-width="1.2"/><path d="M845 449 Q845 430 845 409 Q857 431 845 449Z" fill="#0a640a"/></g>
<g transform="rotate(275 845 449)"><path d="M845 449 Q833 431 845 409 Q857 431 845 449Z" fill="#5a8a5a" stroke="#000" stroke-width="1.2"/><path d="M845 449 Q845 430 845 409 Q857 431 845 449Z" fill="#0a640a"/></g>
<g transform="rotate(320 845 449)"><path d="M845 449 Q833 431 845 409 Q857 431 845 449Z" fill="#5a8a5a" stroke="#000" stroke-width="1.2"/><path d="M845 449 Q845 430 845 409 Q857 431 845 449Z" fill="#0a640a"/></g>
<circle cx="845" cy="449" r="1.5" fill="#8a6a10"/>
<line x1="2" y1="302.5" x2="589" y2="302.5" stroke="#c00000" stroke-width="1.2" stroke-dasharray="1 3"/>
<line x1="589" y1="302.5" x2="1920" y2="302.5" stroke="#c00000" stroke-width="1.1"/>
<line x1="589.5" y1="133" x2="589.5" y2="302" stroke="#00b000" stroke-width="1.1"/>
<line x1="589.5" y1="304" x2="589.5" y2="1153" stroke="#00c000" stroke-width="1.2" stroke-dasharray="1.2 2.8"/>
<line x1="407" y1="133" x2="589" y2="302" stroke="#1a1ac8" stroke-width="1"/>
<line x1="589" y1="302" x2="673" y2="379" stroke="#1010d0" stroke-width="1.3" stroke-dasharray="1.3 4.2" stroke-dashoffset="-3"/>
<polygon points="372,527.3199999999999 1168,316.38 1168,331.38 372,541.3199999999999" fill="#7e786e"/>
<polygon points="372,532.3199999999999 1168,321.38 1168,329.38 372,540.3199999999999" fill="#938c82"/>
<path d="M372 527.3 L1168 316.4 M372 531.8 L1168 320.9 M372 540.8 L1168 330.9" stroke="#000" stroke-width="1.3" fill="none"/>
<path d="M372 542.1 L1168 332.2" stroke="#d8d8e0" stroke-width="0.8" stroke-dasharray="2 3" fill="none"/>
<path d="M751 427.9 L755 438.8" stroke="#c8c8c8" stroke-width="2.2"/>
<path d="M807 413.0 L811 424.0" stroke="#c8c8c8" stroke-width="2.2"/>
<path d="M892 390.5 L896 401.5" stroke="#c8c8c8" stroke-width="2.2"/>
<path d="M979 367.5 L983 378.4" stroke="#c8c8c8" stroke-width="2.2"/>
<path d="M1072 342.8 L1076 353.8" stroke="#c8c8c8" stroke-width="2.2"/>
<polygon points="512,490 656,450 693,554 559,593 539,589" fill="#1e1a1c" stroke="#000" stroke-width="1"/>
<polygon points="512,490 656,450 660,456 514,497" fill="#2a2626"/>
<polygon points="539,588 682,550 693,554 559,593" fill="#8a8272"/>
<polygon points="655,459 663,455 693,554 682,550" fill="#2c2828"/>
<polygon points="513,496 655,459 682,550 539,588" fill="#3d3539" stroke="#000" stroke-width="1"/>
<path d="M663 456 L693 553" stroke="#c8c8d0" stroke-width="0.8" stroke-dasharray="1.5 2"/>
<polygon points="206,538 265,544 274,573 309,711 359,706 408,888 312,930" fill="#1c1611" filter="url(#noise2)"/>
<polygon points="195.5,540 206.5,538 312,930 302,932" fill="url(#brick)"/>
<path d="M195.5 540 L302 932 M206.5 538 L312 930" stroke="#000" stroke-width="1"/>
<polygon points="265,544 351,522 357,524 368,583 329,586 360,700 309,711 274,573" fill="#3a3437" stroke="#000" stroke-width="1"/>
<polygon points="357,524 399,536 410,580 364,576" fill="#221b16" stroke="#000" stroke-width="1"/>
<polygon points="329,586 364,576 410,580 377,590" fill="#7e6d52" stroke="#000" stroke-width="0.8"/>
<polygon points="329,586 377,591 404,694 361,698" fill="#221b16" stroke="#000" stroke-width="1"/>
<polygon points="309,711 361,698 404,694 330,713" fill="#7e6d52" stroke="#000" stroke-width="0.8"/>
<polygon points="206,538 265,544 274,573 217,567" fill="#2a2019" stroke="#000" stroke-width="1"/>
<path d="M217 567 L274 573 L354 531" stroke="#fff" stroke-width="1.3" fill="none"/>
<path d="M359 706 L408 888" stroke="#000" stroke-width="1.2"/>
<polygon points="302,931 383,899 411,897 445,1028 354,1095 346,1098" fill="#444" stroke="#000" stroke-width="1.2"/>
<polygon points="303,933 311,930 355,1094 347,1097" fill="#d2d2d2" stroke="#000" stroke-width="1"/>
<polygon points="384,894.1519999999999 1263,650.669 1263,659.669 384,903.1519999999999" fill="#6e685e" stroke="#000" stroke-width="1.2"/>
<path d="M384 898.2 L1263 654.7" stroke="#111" stroke-width="1"/>
<polygon points="1263,657 1366,630 1366,639 1265,666" fill="#8a90a8" stroke="#000" stroke-width="1"/>
<clipPath id="c_treecirc"><circle cx="1097" cy="416" r="111"/></clipPath>
<g clip-path="url(#c_treecirc)"><polygon points="1150,318 1166,318 1216,557 1200,557" fill="#000" fill-opacity="0.38"/></g>
<polygon points="1166,316 1173,314 1265,660 1249,662 1218,563 1216,557" fill="#47474b"/>
<path d="M1166 316 L1216 557 L1249 662" stroke="#000" stroke-width="0.8" fill="none"/>
<path d="M1168 316 L1254 661" stroke="#000" stroke-width="1"/>
<path d="M1171.5 315 L1260 660" stroke="#7a7468" stroke-width="2.2"/><path d="M1169.5 315 L1257.5 661" stroke="#000" stroke-width="1"/><path d="M1173.5 314 L1265 660" stroke="#000" stroke-width="1.2"/>
<polygon points="1249,662 1265,660 1304,806 1299,810 1292,806" fill="#2c2e38" stroke="#000" stroke-width="1"/>
<path d="M1261 661 L1300 806" stroke="#8890b0" stroke-width="3"/>
<polygon points="1168,314 1312,275 1315,281 1299,295 1177,328" fill="#efeff0"/>
<polygon points="1170,314.5 1312,276 1313,279.5 1172,318.5" fill="#9a9eb8"/>
<polygon points="1168,314 1312,275 1315,281 1299,295 1177,328" fill="none" stroke="#000" stroke-width="1.8" stroke-linejoin="round"/>
<path d="M1026.5 822 L1026.5 831.5 L1215.5 831.5 L1215.5 822 M1035.9 826 L1035.9 831 M1045.3 826 L1045.3 831 M1054.7 826 L1054.7 831 M1064.1 826 L1064.1 831 M1097.2 825 L1097.2 831 M1120.9 825 L1120.9 831 M1144.6 825 L1144.6 831 M1168.3 825 L1168.3 831 M1192.0 825 L1192.0 831 M1215.7 825 L1215.7 831 M1073.5 822 L1073.5 831" stroke="#000" stroke-width="1.2" fill="none"/>
</svg><div class="abs" style="left:0;top:0;width:1920px;height:1px;background:#404040"></div><div class="abs" style="left:0;top:0;width:1px;height:1020px;background:#404040"></div><div class="lbl" style="left:5px;top:3px;font-size:12px">Top</div></div>
<div class="abs" style="left:1365px;top:133px;width:236px;height:226px;background:#d4d0c8;border-left:1px solid #d4d0c8;border-top:1px solid #d4d0c8;border-right:1px solid #404040;border-bottom:1px solid #404040;box-shadow:inset 1px 1px 0 #fff,inset -1px -1px 0 #808080"></div>
<div class="abs" style="left:1368px;top:135px;width:229px;height:15px;background:linear-gradient(90deg,#808080,#c4c4c4);color:#d8d4cc;font-size:12px;line-height:15px;padding-left:2px;white-space:nowrap">Shadow Settings</div>
<div class="abs" style="left:1582px;top:137px;width:13px;height:11px;background:#d4d0c8;border:1px solid;border-color:#fff #404040 #404040 #fff"><svg width="11" height="10" style="position:absolute;left:0;top:0"><path d="M2.5 1.5 L8.5 7.5 M8.5 1.5 L2.5 7.5" stroke="#000" stroke-width="1.6"/></svg></div>
<div class="abs" style="left:1369px;top:153px;width:25px;height:24px;background:#d4d0c8;border:1px solid;border-color:#fff #404040 #404040 #fff;box-shadow:inset -1px -1px 0 #808080"><svg style="position:absolute;left:0px;top:0px" width="22" height="22"><path d="M5 8 L12 5 L18 8 L18 16 L11 19 L5 16Z" fill="#303030"/><path d="M5 8 L12 5 L18 8 L11 11Z" fill="#a0a0a0"/><path d="M11 11 L18 8 L18 16 L11 19Z" fill="#606060"/><path d="M14 17 L20 15 L19 19 L14 20Z" fill="#888"/></svg></div>
<div class="abs" style="left:1398px;top:155px;width:169px;height:20px;background:#fff;border:1px solid;border-color:#808080 #fff #fff #808080;box-shadow:inset 1px 1px 0 #404040, inset -1px -1px 0 #d4d0c8;font-size:12px;line-height:18px;padding-left:3px;white-space:nowrap">UTC+01:00</div>
<div class="abs" style="left:1549px;top:157px;width:16px;height:16px;background:#d4d0c8;border:1px solid;border-color:#fff #404040 #404040 #fff;box-shadow:inset -1px -1px 0 #808080"><svg style="position:absolute;left:0px;top:0px" width="14" height="14"><path d="M3 5 L11 5 L7 9Z" fill="#000"/></svg></div>
<svg class="abs" style="left:1575px;top:155px" width="16" height="20"><rect x="1" y="1" width="13" height="17" fill="#fff"/><rect x="2" y="2" width="11" height="8" fill="#000"/><rect x="4" y="5" width="7" height="2" fill="#fff"/><path d="M3 17 L7.5 12 L12 17Z" fill="#000"/></svg>
<div class="abs" style="left:1370px;top:183px;font-size:11px;line-height:13px;white-space:nowrap;">Time</div>
<div class="abs" style="left:1400px;top:184px;width:117px;height:9px;border:1px solid;border-color:#808080 #fff #fff #808080;box-shadow:inset 1px 1px 0 #404040;background:linear-gradient(90deg,#ffffff 0%,#b8d0e8 25%,#8ab0d8 45%,#5a78f0 70%,#3040a0 85%,#080818 100%)"></div>
<div class="abs" style="left:1450px;top:182px;width:4px;height:12px;background:#d4d0c8;border:1px solid;border-color:#fff #404040 #404040 #fff"></div>
<div class="abs" style="left:1400px;top:193px;width:118px;height:9px;overflow:hidden"><div class="abs" style="left:0;top:0px;font-size:9px;font-weight:bold;color:#102858;white-space:nowrap;letter-spacing:0.2px">06:48 AM</div><div class="abs" style="left:47px;top:0px;font-size:9px;font-weight:bold;color:#102858">Noon</div><div class="abs" style="left:77px;top:0px;font-size:9px;font-weight:bold;color:#102858;white-space:nowrap;letter-spacing:0.2px">06:56 PM</div></div>
<div class="abs" style="left:1524px;top:180px;width:70px;height:21px;background:#fff;border:1px solid;border-color:#808080 #fff #fff #808080;box-shadow:inset 1px 1px 0 #404040, inset -1px -1px 0 #d4d0c8;font-size:12px;line-height:19px;padding-left:3px;white-space:nowrap">12:00</div>
<div class="abs" style="left:1578px;top:182px;width:14px;height:9px;background:#d4d0c8;border:1px solid;border-color:#fff #404040 #404040 #fff;box-shadow:inset -1px -1px 0 #808080"><svg style="position:absolute;left:0px;top:0px" width="12" height="8"><path d="M4 5 L6 3 L8 5Z" fill="#000"/></svg></div>
<div class="abs" style="left:1578px;top:191px;width:14px;height:8px;background:#d4d0c8;border:1px solid;border-color:#fff #404040 #404040 #fff;box-shadow:inset -1px -1px 0 #808080"><svg style="position:absolute;left:0px;top:0px" width="12" height="8"><path d="M4 3 L6 5 L8 3Z" fill="#000"/></svg></div>
<div class="abs" style="left:1370px;top:210px;font-size:11px;line-height:13px;white-space:nowrap;">Date</div>
<div class="abs" style="left:1400px;top:210px;width:117px;height:8px;border:1px solid;border-color:#808080 #fff #fff #808080;box-shadow:inset 1px 1px 0 #404040;background:linear-gradient(90deg,#ffffff 0%,#f8e8a0 12%,#f8c000 35%,#f86000 55%,#f01010 72%,#f85050 82%,#ffffff 100%)"></div>
<div class="abs" style="left:1482px;top:208px;width:4px;height:12px;background:#d4d0c8;border:1px solid;border-color:#fff #404040 #404040 #fff"></div>
<div class="abs" style="left:1400px;top:219px;width:120px;height:9px;overflow:hidden">
<div class="abs" style="left:4.0px;top:-1px;font-size:9px;font-weight:bold;color:#102858">J</div>
<div class="abs" style="left:13.6px;top:-1px;font-size:9px;font-weight:bold;color:#102858">F</div>
<div class="abs" style="left:23.2px;top:-1px;font-size:9px;font-weight:bold;color:#102858">M</div>
<div class="abs" style="left:32.8px;top:-1px;font-size:9px;font-weight:bold;color:#102858">A</div>
<div class="abs" style="left:42.4px;top:-1px;font-size:9px;font-weight:bold;color:#102858">M</div>
<div class="abs" style="left:52.0px;top:-1px;font-size:9px;font-weight:bold;color:#102858">J</div>
<div class="abs" style="left:61.6px;top:-1px;font-size:9px;font-weight:bold;color:#102858">J</div>
<div class="abs" style="left:71.2px;top:-1px;font-size:9px;font-weight:bold;color:#102858">A</div>
<div class="abs" style="left:80.8px;top:-1px;font-size:9px;font-weight:bold;color:#102858">S</div>
<div class="abs" style="left:90.4px;top:-1px;font-size:9px;font-weight:bold;color:#102858">O</div>
<div class="abs" style="left:100.0px;top:-1px;font-size:9px;font-weight:bold;color:#102858">N</div>
<div class="abs" style="left:109.6px;top:-1px;font-size:9px;font-weight:bold;color:#102858">D</div>
</div>
<div class="abs" style="left:1524px;top:205px;width:70px;height:21px;background:#fff;border:1px solid;border-color:#808080 #fff #fff #808080;box-shadow:inset 1px 1px 0 #404040, inset -1px -1px 0 #d4d0c8;font-size:12px;line-height:19px;padding-left:3px;white-space:nowrap">&nbsp;9 /21</div>
<div class="abs" style="left:1577px;top:207px;width:15px;height:17px;background:#d4d0c8;border:1px solid;border-color:#fff #404040 #404040 #fff;box-shadow:inset -1px -1px 0 #808080"><svg style="position:absolute;left:0px;top:0px" width="13" height="15"><path d="M3 6 L10 6 L6.5 10Z" fill="#000"/></svg></div>
<div class="abs" style="left:1369px;top:234px;width:228px;height:2px;border-top:1px solid #808080;border-bottom:1px solid #fff"></div>
<div class="abs" style="left:1370px;top:245px;font-size:11px;line-height:13px;white-space:nowrap;">Light</div>
<div class="abs" style="left:1400px;top:248px;width:117px;height:9px;border:1px solid;border-color:#808080 #fff #fff #808080;box-shadow:inset 1px 1px 0 #404040;background:linear-gradient(90deg,#000 0%,#505050 40%,#c0c0c0 80%,#f8f8f8 100%)"></div>
<div class="abs" style="left:1498px;top:246px;width:4px;height:13px;background:#d4d0c8;border:1px solid;border-color:#fff #404040 #404040 #fff"></div>
<div class="abs" style="left:1524px;top:244px;width:37px;height:22px;background:#fff;border:1px solid;border-color:#808080 #fff #fff #808080;box-shadow:inset 1px 1px 0 #404040, inset -1px -1px 0 #d4d0c8;font-size:12px;line-height:20px;padding-left:2px;white-space:nowrap">88</div>
<div class="abs" style="left:1548px;top:246px;width:12px;height:9px;background:#d4d0c8;border:1px solid;border-color:#fff #404040 #404040 #fff;box-shadow:inset -1px -1px 0 #808080"><svg style="position:absolute;left:0px;top:0px" width="10" height="7"><path d="M3 5 L5 3 L7 5Z" fill="#000"/></svg></div>
<div class="abs" style="left:1548px;top:256px;width:12px;height:8px;background:#d4d0c8;border:1px solid;border-color:#fff #404040 #404040 #fff;box-shadow:inset -1px -1px 0 #808080"><svg style="position:absolute;left:0px;top:0px" width="10" height="7"><path d="M3 3 L5 5 L7 3Z" fill="#000"/></svg></div>
<div class="abs" style="left:1370px;top:272px;font-size:11px;line-height:13px;white-space:nowrap;">Dark</div>
<div class="abs" style="left:1400px;top:274px;width:117px;height:9px;border:1px solid;border-color:#808080 #fff #fff #808080;box-shadow:inset 1px 1px 0 #404040;background:linear-gradient(90deg,#000 0%,#505050 40%,#c0c0c0 80%,#f8f8f8 100%)"></div>
<div class="abs" style="left:1404px;top:272px;width:4px;height:13px;background:#d4d0c8;border:1px solid;border-color:#fff #404040 #404040 #fff"></div>
<div class="abs" style="left:1524px;top:270px;width:37px;height:22px;background:#fff;border:1px solid;border-color:#808080 #fff #fff #808080;box-shadow:inset 1px 1px 0 #404040, inset -1px -1px 0 #d4d0c8;font-size:12px;line-height:20px;padding-left:2px;white-space:nowrap">5</div>
<div class="abs" style="left:1548px;top:272px;width:12px;height:9px;background:#d4d0c8;border:1px solid;border-color:#fff #404040 #404040 #fff;box-shadow:inset -1px -1px 0 #808080"><svg style="position:absolute;left:0px;top:0px" width="10" height="7"><path d="M3 5 L5 3 L7 5Z" fill="#000"/></svg></div>
<div class="abs" style="left:1548px;top:282px;width:12px;height:8px;background:#d4d0c8;border:1px solid;border-color:#fff #404040 #404040 #fff;box-shadow:inset -1px -1px 0 #808080"><svg style="position:absolute;left:0px;top:0px" width="10" height="7"><path d="M3 3 L5 5 L7 3Z" fill="#000"/></svg></div>
<div class="abs" style="left:1369px;top:297px;width:228px;height:2px;border-top:1px solid #808080;border-bottom:1px solid #fff"></div>
<div class="abs" style="left:1370px;top:302px;width:13px;height:13px;background:#fff;border:1px solid;border-color:#808080 #fff #fff #808080;box-shadow:inset 1px 1px 0 #404040, inset -1px -1px 0 #d4d0c8;"></div>
<div class="abs" style="left:1388px;top:303px;font-size:11px;line-height:13px;white-space:nowrap;">Use sun for shading</div>
<div class="abs" style="left:1370px;top:320px;font-size:11px;line-height:13px;white-space:nowrap;">Display:</div>
<div class="abs" style="left:1370px;top:336px;width:13px;height:13px;background:#fff;border:1px solid;border-color:#808080 #fff #fff #808080;box-shadow:inset 1px 1px 0 #404040, inset -1px -1px 0 #d4d0c8;"><svg width="11" height="11" style="position:absolute;left:0;top:0"><path d="M2 5 L4.5 8 L9 2.5" stroke="#000" stroke-width="2" fill="none"/></svg></div>
<div class="abs" style="left:1388px;top:337px;font-size:11px;line-height:13px;white-space:nowrap;">On faces</div>
<div class="abs" style="left:1437px;top:336px;width:13px;height:13px;background:#fff;border:1px solid;border-color:#808080 #fff #fff #808080;box-shadow:inset 1px 1px 0 #404040, inset -1px -1px 0 #d4d0c8;"><svg width="11" height="11" style="position:absolute;left:0;top:0"><path d="M2 5 L4.5 8 L9 2.5" stroke="#000" stroke-width="2" fill="none"/></svg></div>
<div class="abs" style="left:1455px;top:337px;font-size:11px;line-height:13px;white-space:nowrap;">On ground</div>
<div class="abs" style="left:1515px;top:336px;width:13px;height:13px;background:#fff;border:1px solid;border-color:#808080 #fff #fff #808080;box-shadow:inset 1px 1px 0 #404040, inset -1px -1px 0 #d4d0c8;"></div>
<div class="abs" style="left:1532px;top:337px;font-size:11px;line-height:13px;white-space:nowrap;">From edges</div>
<div class="abs" style="left:1365px;top:366px;width:236px;height:384px;background:#d4d0c8;border-left:1px solid #d4d0c8;border-top:1px solid #d4d0c8;border-right:1px solid #404040;border-bottom:1px solid #404040;box-shadow:inset 1px 1px 0 #fff,inset -1px -1px 0 #808080"></div>
<div class="abs" style="left:1368px;top:369px;width:229px;height:16px;background:linear-gradient(90deg,#808080,#c4c4c4);color:#d8d4cc;font-size:12px;line-height:16px;padding-left:2px;white-space:nowrap">Scenes</div>
<div class="abs" style="left:1582px;top:371px;width:13px;height:12px;background:#d4d0c8;border:1px solid;border-color:#fff #404040 #404040 #fff"><svg width="11" height="10" style="position:absolute;left:0;top:0"><path d="M2.5 1.5 L8.5 7.5 M8.5 1.5 L2.5 7.5" stroke="#000" stroke-width="1.6"/></svg></div>
<svg class="abs" style="left:1370px;top:387px" width="228" height="22" viewBox="0 0 228 22"><path d="M5 9 A7 7 0 0 1 18 7" fill="none" stroke="#000" stroke-width="2.2"/><path d="M15 3 L20 8 L14 9Z" fill="#000"/><path d="M19 13 A7 7 0 0 1 6 15" fill="none" stroke="#000" stroke-width="2.2"/><path d="M9 19 L4 14 L10 13Z" fill="#000"/><circle cx="36.5" cy="11" r="7.5" fill="#fff" stroke="#000" stroke-width="1.6"/><path d="M32 11 L41 11 M36.5 6.5 L36.5 15.5" stroke="#000" stroke-width="2.4"/><circle cx="60" cy="11" r="7.5" fill="#fff" stroke="#000" stroke-width="1.6"/><path d="M55.5 11 L64.5 11" stroke="#000" stroke-width="2.4"/><path d="M115 4 L110 4 L110 15" fill="none" stroke="#000" stroke-width="2.4"/><path d="M106 13 L110 19 L114 13Z" fill="#000"/><path d="M130 18 L135 18 L135 7" fill="none" stroke="#000" stroke-width="2.4"/><path d="M131 9 L135 3 L139 9Z" fill="#000"/><rect x="150.5" y="4.5" width="5" height="5" fill="#fff" stroke="#000"/><rect x="150.5" y="12.5" width="5" height="5" fill="#fff" stroke="#000"/><path d="M158 5 L165 5 M158 8 L165 8 M158 13 L165 13 M158 16 L165 16" stroke="#000" stroke-width="1.2"/><path d="M168 9 L175 9 L171.5 13Z" fill="#000"/><rect x="183" y="1" width="13" height="19" fill="#fff"/><rect x="184" y="2" width="11" height="9" fill="#000"/><rect x="186" y="5.5" width="7" height="2" fill="#fff"/><path d="M185 19 L189.5 14 L194 19Z" fill="#000"/><path d="M206 4 L214 4 L220 11 L214 18 L206 18Z" fill="#000"/><rect x="207" y="6" width="7" height="9" fill="#d0e0f0" stroke="#2060a0" stroke-width="0.8"/><path d="M208 9 L213 9 M208 11 L213 11" stroke="#000" stroke-width="0.8"/></svg>
<div class="abs" style="left:1369px;top:411px;width:228px;height:125px;background:#fff;border-top:1px solid #808080;overflow:hidden">
<div class="abs" style="left:0;top:-50px;width:211px;height:72px;border:2px solid #0a246a"></div>
<div class="abs" style="left:3px;top:0;width:65px;height:20px;background:#a0a0a0;border-top:4px solid #000"></div>
<div class="abs" style="left:0;top:27px;width:211px;height:71px;border:2px solid #0a246a"></div>
<div class="abs" style="left:3px;top:30px;width:64px;height:65px;background:#a0a0a0"></div>
<svg class="abs" style="left:55px;top:79px" width="12" height="14"><path d="M1 13 L3 9 L10 1 L12 3 L5 11Z" fill="#d02020" stroke="#401010" stroke-width="0.5"/><path d="M1 13 L3 9 L5 11Z" fill="#e8c890"/></svg>
<div class="abs" style="left:72px;top:33px;font-size:11px;line-height:13px;white-space:nowrap">Autum n Equinox 12:00</div>
<div class="abs" style="left:72px;top:46px;font-size:11px;line-height:13px;white-space:nowrap">Photo: <i style="color:#8a8a8a">None</i></div>
<div class="abs" style="left:72px;top:59px;font-size:11px;line-height:13px;white-space:nowrap;font-style:italic;color:#8a8a8a">No Description</div>
<div class="abs" style="left:3px;top:105px;width:64px;height:20px;background:#a0a0a0;border-bottom:3px solid #000"></div>
<div class="abs" style="left:72px;top:106px;font-size:11px;line-height:13px;white-space:nowrap">Autum n Equinox 16:00</div>
<div class="abs" style="left:72px;top:119px;font-size:11px;line-height:13px;white-space:nowrap">Photo: <i style="color:#8a8a8a">None</i></div>
</div>
<div class="abs" style="left:1580px;top:412px;width:16px;height:124px;background-color:#e8e6e2;background-image:linear-gradient(45deg,#d4d0c8 25%,transparent 25%,transparent 75%,#d4d0c8 75%),linear-gradient(45deg,#d4d0c8 25%,transparent 25%,transparent 75%,#d4d0c8 75%);background-size:2px 2px;background-position:0 0,1px 1px"></div>
<div class="abs" style="left:1580px;top:412px;width:16px;height:16px;background:#d4d0c8;border:1px solid;border-color:#fff #404040 #404040 #fff;box-shadow:inset -1px -1px 0 #808080"><svg style="position:absolute;left:0px;top:0px" width="14" height="14"><path d="M3 9 L7 5 L11 9Z" fill="#000"/></svg></div>
<div class="abs" style="left:1580px;top:494px;width:16px;height:15px;background:#d4d0c8;border:1px solid;border-color:#fff #404040 #404040 #fff;box-shadow:inset -1px -1px 0 #808080"></div>
<div class="abs" style="left:1580px;top:518px;width:16px;height:17px;background:#d4d0c8;border:1px solid;border-color:#fff #404040 #404040 #fff;box-shadow:inset -1px -1px 0 #808080"><svg style="position:absolute;left:0px;top:0px" width="14" height="14"><path d="M3 5 L11 5 L7 9Z" fill="#000"/></svg></div>
<div class="abs" style="left:1369px;top:536px;width:228px;height:1px;background:#fff"></div>
<div class="abs" style="left:1441px;top:546px;width:13px;height:13px;background:#fff;border:1px solid;border-color:#808080 #fff #fff #808080;box-shadow:inset 1px 1px 0 #404040, inset -1px -1px 0 #d4d0c8;"><svg width="11" height="11" style="position:absolute;left:0;top:0"><path d="M2 5 L4.5 8 L9 2.5" stroke="#000" stroke-width="2" fill="none"/></svg></div>
<div class="abs" style="left:1459px;top:548px;font-size:11px;line-height:13px;white-space:nowrap;"><u style="text-decoration:none;border-bottom:1px solid #000;line-height:11px;display:inline-block">I</u>nclude in animation</div>
<div class="abs" style="left:1369px;top:573px;width:66px;text-align:right;font-size:11px;line-height:13px">Name:</div>
<div class="abs" style="left:1441px;top:567px;width:151px;height:19px;background:#fff;border:1px solid;border-color:#808080 #fff #fff #808080;box-shadow:inset 1px 1px 0 #404040, inset -1px -1px 0 #d4d0c8;font-size:11px;line-height:17px;padding-left:3px;white-space:nowrap">Autumn Equinox 12:00</div>
<div class="abs" style="left:1369px;top:594px;width:66px;text-align:right;font-size:11px;line-height:13px">Description:</div>
<div class="abs" style="left:1441px;top:590px;width:151px;height:19px;background:#fff;border:1px solid;border-color:#808080 #fff #fff #808080;box-shadow:inset 1px 1px 0 #404040, inset -1px -1px 0 #d4d0c8;font-size:11px;line-height:17px;padding-left:3px;white-space:nowrap"></div>
<div class="abs" style="left:1369px;top:614px;width:67px;text-align:right;font-size:11px;line-height:13px">Properties<br>to save:</div>
<div class="abs" style="left:1439px;top:617px;width:13px;height:13px;background:#fff;border:1px solid;border-color:#808080 #fff #fff #808080;box-shadow:inset 1px 1px 0 #404040, inset -1px -1px 0 #d4d0c8;"><svg width="11" height="11" style="position:absolute;left:0;top:0"><path d="M2 5 L4.5 8 L9 2.5" stroke="#000" stroke-width="2" fill="none"/></svg></div>
<div class="abs" style="left:1457px;top:618px;font-size:11px;line-height:13px;white-space:nowrap;">Camera Location</div>
<div class="abs" style="left:1439px;top:635px;width:13px;height:13px;background:#fff;border:1px solid;border-color:#808080 #fff #fff #808080;box-shadow:inset 1px 1px 0 #404040, inset -1px -1px 0 #d4d0c8;"><svg width="11" height="11" style="position:absolute;left:0;top:0"><path d="M2 5 L4.5 8 L9 2.5" stroke="#000" stroke-width="2" fill="none"/></svg></div>
<div class="abs" style="left:1457px;top:636px;font-size:11px;line-height:13px;white-space:nowrap;">Hidden Geometry</div>
<div class="abs" style="left:1439px;top:653px;width:13px;height:13px;background:#fff;border:1px solid;border-color:#808080 #fff #fff #808080;box-shadow:inset 1px 1px 0 #404040, inset -1px -1px 0 #d4d0c8;"><svg width="11" height="11" style="position:absolute;left:0;top:0"><path d="M2 5 L4.5 8 L9 2.5" stroke="#000" stroke-width="2" fill="none"/></svg></div>
<div class="abs" style="left:1457px;top:654px;font-size:11px;line-height:13px;white-space:nowrap;">Visible Layers</div>
<div class="abs" style="left:1439px;top:671px;width:13px;height:13px;background:#fff;border:1px solid;border-color:#808080 #fff #fff #808080;box-shadow:inset 1px 1px 0 #404040, inset -1px -1px 0 #d4d0c8;"><svg width="11" height="11" style="position:absolute;left:0;top:0"><path d="M2 5 L4.5 8 L9 2.5" stroke="#000" stroke-width="2" fill="none"/></svg></div>
<div class="abs" style="left:1457px;top:672px;font-size:11px;line-height:13px;white-space:nowrap;">Active Section Planes</div>
<div class="abs" style="left:1439px;top:689px;width:13px;height:13px;background:#fff;border:1px solid;border-color:#808080 #fff #fff #808080;box-shadow:inset 1px 1px 0 #404040, inset -1px -1px 0 #d4d0c8;"><svg width="11" height="11" style="position:absolute;left:0;top:0"><path d="M2 5 L4.5 8 L9 2.5" stroke="#000" stroke-width="2" fill="none"/></svg></div>
<div class="abs" style="left:1457px;top:690px;font-size:11px;line-height:13px;white-space:nowrap;">Style and Fog</div>
<div class="abs" style="left:1439px;top:707px;width:13px;height:13px;background:#fff;border:1px solid;border-color:#808080 #fff #fff #808080;box-shadow:inset 1px 1px 0 #404040, inset -1px -1px 0 #d4d0c8;"><svg width="11" height="11" style="position:absolute;left:0;top:0"><path d="M2 5 L4.5 8 L9 2.5" stroke="#000" stroke-width="2" fill="none"/></svg></div>
<div class="abs" style="left:1457px;top:708px;font-size:11px;line-height:13px;white-space:nowrap;">Shadow Settings</div>
<div class="abs" style="left:1439px;top:725px;width:13px;height:13px;background:#fff;border:1px solid;border-color:#808080 #fff #fff #808080;box-shadow:inset 1px 1px 0 #404040, inset -1px -1px 0 #d4d0c8;"><svg width="11" height="11" style="position:absolute;left:0;top:0"><path d="M2 5 L4.5 8 L9 2.5" stroke="#000" stroke-width="2" fill="none"/></svg></div>
<div class="abs" style="left:1457px;top:726px;font-size:11px;line-height:13px;white-space:nowrap;">Axes Location</div>
<div class="abs" style="left:1603px;top:131px;width:314px;height:946px;background:#d4d0c8;border-left:1px solid #d4d0c8;border-top:1px solid #d4d0c8;border-right:1px solid #404040;border-bottom:1px solid #404040;box-shadow:inset 1px 1px 0 #fff,inset -1px -1px 0 #808080"></div>
<div class="abs" style="left:1601px;top:750px;width:1px;height:403px;background:#d4d0c8"></div><div class="abs" style="left:1602px;top:133px;width:1px;height:944px;background:#fff"></div><div class="abs" style="left:1604px;top:134px;width:1px;height:942px;background:#d4d0c8"></div>
<div class="abs" style="left:1605px;top:133px;width:308px;height:15px;background:linear-gradient(90deg,#808080,#c4c4c4);color:#d8d4cc;font-size:12px;line-height:15px;padding-left:2px;white-space:nowrap">Layers</div>
<div class="abs" style="left:1898px;top:135px;width:13px;height:11px;background:#d4d0c8;border:1px solid;border-color:#fff #404040 #404040 #fff"><svg width="11" height="10" style="position:absolute;left:0;top:0"><path d="M2.5 1.5 L8.5 7.5 M8.5 1.5 L2.5 7.5" stroke="#000" stroke-width="1.6"/></svg></div>
<svg class="abs" style="left:1608px;top:152px" width="310" height="22" viewBox="0 0 310 22"><circle cx="10.5" cy="10" r="7.5" fill="#fff" stroke="#000" stroke-width="1.6"/><path d="M6 10 L15 10 M10.5 5.5 L10.5 14.5" stroke="#000" stroke-width="2.4"/><circle cx="34.5" cy="10" r="7.5" fill="#fff" stroke="#000" stroke-width="1.6"/><path d="M30 10 L39 10" stroke="#000" stroke-width="2.4"/><path d="M284 3 L292 3 L298 10 L292 17 L284 17Z" fill="#000"/><rect x="285" y="5" width="7" height="9" fill="#d0e0f0" stroke="#2060a0" stroke-width="0.8"/><path d="M286 8 L291 8 M286 10 L291 10" stroke="#000" stroke-width="0.8"/></svg>
<div class="abs" style="left:1605px;top:176px;width:308px;height:900px;background:#fff"></div>
<div class="abs" style="left:1605px;top:177px;width:217px;height:16px;background:#d4d0c8;border:1px solid;border-color:#fff #404040 #404040 #fff;box-shadow:inset -1px -1px 0 #808080;font-size:11px;line-height:14px;padding-left:7px">Name</div>
<div class="abs" style="left:1822px;top:177px;width:50px;height:16px;background:#d4d0c8;border:1px solid;border-color:#fff #404040 #404040 #fff;box-shadow:inset -1px -1px 0 #808080;font-size:11px;line-height:14px;padding-left:7px">Visible</div>
<div class="abs" style="left:1872px;top:177px;width:41px;height:16px;background:#d4d0c8;border:1px solid;border-color:#fff #404040 #404040 #fff;box-shadow:inset -1px -1px 0 #808080;font-size:11px;line-height:14px;padding-left:8px">C...</div>
<svg class="abs" style="left:1654px;top:181px" width="10" height="9"><path d="M1 1 L9 1 L5 8Z" fill="none" stroke="#808080" stroke-width="1"/><path d="M1.5 1.5 L5 8" stroke="#fff" stroke-width="1"/></svg>
<svg class="abs" style="left:1608px;top:195px" width="14" height="14"><circle cx="6.5" cy="7" r="5.6" fill="#fff" stroke="#000" stroke-width="1.1"/><path d="M6.5 4.5 L9 7 L6.5 9.5 L4 7Z" fill="#000"/></svg>
<div class="abs" style="left:1624px;top:195px;font-size:11px;line-height:14px;white-space:nowrap;letter-spacing:-0.12px">Layer0</div>
<div class="abs" style="left:1842px;top:196px;width:13px;height:13px;background:#fff;border:1px solid #000;"><svg width="11" height="11" style="position:absolute;left:0;top:0"><path d="M2 5 L4.5 8 L9 2.5" stroke="#000" stroke-width="2" fill="none"/></svg></div>
<div class="abs" style="left:1885px;top:194px;width:15px;height:15px;background:#1070b0"></div>
<svg class="abs" style="left:1608px;top:212px" width="14" height="14"><circle cx="6.5" cy="7" r="5.6" fill="#fff" stroke="#000" stroke-width="1.1"/></svg>
<div class="abs" style="left:1624px;top:212px;font-size:11px;line-height:14px;white-space:nowrap;letter-spacing:-0.12px">2D Existing trees and shrubs</div>
<div class="abs" style="left:1842px;top:213px;width:13px;height:13px;background:#fff;border:1px solid #000;"><svg width="11" height="11" style="position:absolute;left:0;top:0"><path d="M2 5 L4.5 8 L9 2.5" stroke="#000" stroke-width="2" fill="none"/></svg></div>
<div class="abs" style="left:1885px;top:211px;width:15px;height:15px;background:#a01818"></div>
<svg class="abs" style="left:1608px;top:229px" width="14" height="14"><circle cx="6.5" cy="7" r="5.6" fill="#fff" stroke="#000" stroke-width="1.1"/></svg>
<div class="abs" style="left:1624px;top:229px;font-size:11px;line-height:14px;white-space:nowrap;letter-spacing:-0.12px">2D Phase 1 new trees and shrubs</div>
<div class="abs" style="left:1842px;top:230px;width:13px;height:13px;background:#fff;border:1px solid #000;"></div>
<div class="abs" style="left:1885px;top:228px;width:15px;height:15px;background:#10988a"></div>
<svg class="abs" style="left:1608px;top:246px" width="14" height="14"><circle cx="6.5" cy="7" r="5.6" fill="#fff" stroke="#000" stroke-width="1.1"/></svg>
<div class="abs" style="left:1624px;top:246px;font-size:11px;line-height:14px;white-space:nowrap;letter-spacing:-0.12px">2D Phase 2 new trees and shrubs</div>
<div class="abs" style="left:1842px;top:247px;width:13px;height:13px;background:#fff;border:1px solid #000;"></div>
<div class="abs" style="left:1885px;top:245px;width:15px;height:15px;background:#10508e"></div>
<svg class="abs" style="left:1608px;top:263px" width="14" height="14"><circle cx="6.5" cy="7" r="5.6" fill="#fff" stroke="#000" stroke-width="1.1"/></svg>
<div class="abs" style="left:1624px;top:263px;font-size:11px;line-height:14px;white-space:nowrap;letter-spacing:-0.12px">Key</div>
<div class="abs" style="left:1842px;top:264px;width:13px;height:13px;background:#fff;border:1px solid #000;"></div>
<div class="abs" style="left:1885px;top:262px;width:15px;height:15px;background:#d04a08"></div>
<svg class="abs" style="left:1608px;top:280px" width="14" height="14"><circle cx="6.5" cy="7" r="5.6" fill="#fff" stroke="#000" stroke-width="1.1"/></svg>
<div class="abs" style="left:1624px;top:280px;font-size:11px;line-height:14px;white-space:nowrap;letter-spacing:-0.12px">Layer1</div>
<div class="abs" style="left:1842px;top:281px;width:13px;height:13px;background:#fff;border:1px solid #000;"></div>
<div class="abs" style="left:1885px;top:279px;width:15px;height:15px;background:#6a4808"></div>
<svg class="abs" style="left:1608px;top:297px" width="14" height="14"><circle cx="6.5" cy="7" r="5.6" fill="#fff" stroke="#000" stroke-width="1.1"/></svg>
<div class="abs" style="left:1624px;top:297px;font-size:11px;line-height:14px;white-space:nowrap;letter-spacing:-0.12px">New beds</div>
<div class="abs" style="left:1842px;top:298px;width:13px;height:13px;background:#fff;border:1px solid #000;"></div>
<div class="abs" style="left:1885px;top:296px;width:15px;height:15px;background:#6a4808"></div>
<svg class="abs" style="left:1608px;top:314px" width="14" height="14"><circle cx="6.5" cy="7" r="5.6" fill="#fff" stroke="#000" stroke-width="1.1"/></svg>
<div class="abs" style="left:1624px;top:314px;font-size:11px;line-height:14px;white-space:nowrap;letter-spacing:-0.12px">New Hugle bed</div>
<div class="abs" style="left:1842px;top:315px;width:13px;height:13px;background:#fff;border:1px solid #000;"></div>
<div class="abs" style="left:1885px;top:313px;width:15px;height:15px;background:#7a7aa0"></div>
<svg class="abs" style="left:1608px;top:331px" width="14" height="14"><circle cx="6.5" cy="7" r="5.6" fill="#fff" stroke="#000" stroke-width="1.1"/></svg>
<div class="abs" style="left:1624px;top:331px;font-size:11px;line-height:14px;white-space:nowrap;letter-spacing:-0.12px">New Paths</div>
<div class="abs" style="left:1842px;top:332px;width:13px;height:13px;background:#fff;border:1px solid #000;"></div>
<div class="abs" style="left:1885px;top:330px;width:15px;height:15px;background:#f0b880"></div>
<svg class="abs" style="left:1608px;top:348px" width="14" height="14"><circle cx="6.5" cy="7" r="5.6" fill="#fff" stroke="#000" stroke-width="1.1"/></svg>
<div class="abs" style="left:1624px;top:348px;font-size:11px;line-height:14px;white-space:nowrap;letter-spacing:-0.12px">New Phase 1 Labels</div>
<div class="abs" style="left:1842px;top:349px;width:13px;height:13px;background:#fff;border:1px solid #000;"></div>
<div class="abs" style="left:1885px;top:347px;width:15px;height:15px;background:#b04808"></div>
<svg class="abs" style="left:1608px;top:365px" width="14" height="14"><circle cx="6.5" cy="7" r="5.6" fill="#fff" stroke="#000" stroke-width="1.1"/></svg>
<div class="abs" style="left:1624px;top:365px;font-size:11px;line-height:14px;white-space:nowrap;letter-spacing:-0.12px">New Phase 2 labels</div>
<div class="abs" style="left:1842px;top:366px;width:13px;height:13px;background:#fff;border:1px solid #000;"></div>
<div class="abs" style="left:1885px;top:364px;width:15px;height:15px;background:#7a7aa0"></div>
<svg class="abs" style="left:1608px;top:382px" width="14" height="14"><circle cx="6.5" cy="7" r="5.6" fill="#fff" stroke="#000" stroke-width="1.1"/></svg>
<div class="abs" style="left:1624px;top:382px;font-size:11px;line-height:14px;white-space:nowrap;letter-spacing:-0.12px">New Pond</div>
<div class="abs" style="left:1842px;top:383px;width:13px;height:13px;background:#fff;border:1px solid #000;"></div>
<div class="abs" style="left:1885px;top:381px;width:15px;height:15px;background:#00ffff"></div>
<svg class="abs" style="left:1608px;top:399px" width="14" height="14"><circle cx="6.5" cy="7" r="5.6" fill="#fff" stroke="#000" stroke-width="1.1"/></svg>
<div class="abs" style="left:1624px;top:399px;font-size:11px;line-height:14px;white-space:nowrap;letter-spacing:-0.12px">New slug free planters</div>
<div class="abs" style="left:1842px;top:400px;width:13px;height:13px;background:#fff;border:1px solid #000;"></div>
<div class="abs" style="left:1885px;top:398px;width:15px;height:15px;background:#10988a"></div>
<svg class="abs" style="left:1608px;top:416px" width="14" height="14"><circle cx="6.5" cy="7" r="5.6" fill="#fff" stroke="#000" stroke-width="1.1"/></svg>
<div class="abs" style="left:1624px;top:416px;font-size:11px;line-height:14px;white-space:nowrap;letter-spacing:-0.12px">Old flower bed</div>
<div class="abs" style="left:1842px;top:417px;width:13px;height:13px;background:#fff;border:1px solid #000;"></div>
<div class="abs" style="left:1885px;top:415px;width:15px;height:15px;background:#7a7aa0"></div>
<svg class="abs" style="left:1608px;top:433px" width="14" height="14"><circle cx="6.5" cy="7" r="5.6" fill="#fff" stroke="#000" stroke-width="1.1"/></svg>
<div class="abs" style="left:1624px;top:433px;font-size:11px;line-height:14px;white-space:nowrap;letter-spacing:-0.12px">Old Gate</div>
<div class="abs" style="left:1842px;top:434px;width:13px;height:13px;background:#fff;border:1px solid #000;"><svg width="11" height="11" style="position:absolute;left:0;top:0"><path d="M2 5 L4.5 8 L9 2.5" stroke="#000" stroke-width="2" fill="none"/></svg></div>
<div class="abs" style="left:1885px;top:432px;width:15px;height:15px;background:#6a4808"></div>
<svg class="abs" style="left:1608px;top:450px" width="14" height="14"><circle cx="6.5" cy="7" r="5.6" fill="#fff" stroke="#000" stroke-width="1.1"/></svg>
<div class="abs" style="left:1624px;top:450px;font-size:11px;line-height:14px;white-space:nowrap;letter-spacing:-0.12px">Old Labels</div>
<div class="abs" style="left:1842px;top:451px;width:13px;height:13px;background:#fff;border:1px solid #000;"></div>
<div class="abs" style="left:1885px;top:449px;width:15px;height:15px;background:#10988a"></div>
<svg class="abs" style="left:1608px;top:467px" width="14" height="14"><circle cx="6.5" cy="7" r="5.6" fill="#fff" stroke="#000" stroke-width="1.1"/></svg>
<div class="abs" style="left:1624px;top:467px;font-size:11px;line-height:14px;white-space:nowrap;letter-spacing:-0.12px">Old Lawn</div>
<div class="abs" style="left:1842px;top:468px;width:13px;height:13px;background:#fff;border:1px solid #000;"></div>
<div class="abs" style="left:1885px;top:466px;width:15px;height:15px;background:#9000f0"></div>
<svg class="abs" style="left:1608px;top:484px" width="14" height="14"><circle cx="6.5" cy="7" r="5.6" fill="#fff" stroke="#000" stroke-width="1.1"/></svg>
<div class="abs" style="left:1624px;top:484px;font-size:11px;line-height:14px;white-space:nowrap;letter-spacing:-0.12px">Old Removble fence</div>
<div class="abs" style="left:1842px;top:485px;width:13px;height:13px;background:#fff;border:1px solid #000;"><svg width="11" height="11" style="position:absolute;left:0;top:0"><path d="M2 5 L4.5 8 L9 2.5" stroke="#000" stroke-width="2" fill="none"/></svg></div>
<div class="abs" style="left:1885px;top:483px;width:15px;height:15px;background:#7a7aa0"></div>
<div class="abs" style="left:1918px;top:133px;width:1px;height:1020px;background:#d4d0c8"></div>
<div id="status">
<svg class="abs" style="left:0;top:0" width="130" height="26"><circle cx="13" cy="13" r="9" fill="#f8e8c0" stroke="#8a6a30" stroke-width="2"/><path d="M13 17 L13 21" stroke="#000" stroke-width="1.2"/><circle cx="13" cy="11" r="4" fill="#e03030" stroke="#601010" stroke-width="0.8"/><circle cx="41" cy="13" r="9" fill="#f8e8c0" stroke="#8a6a30" stroke-width="2"/><circle cx="41" cy="8" r="2" fill="#000"/><path d="M38.5 11 L43.5 11 L43.5 16 L42.5 16 L42.5 20 L39.5 20 L39.5 16 L38.5 16Z" fill="#000"/><circle cx="69" cy="13" r="9" fill="#f8e8c0" stroke="#8a6a30" stroke-width="2"/><path d="M73 9 A5.5 5.5 0 1 0 74 15 L70 15" fill="none" stroke="#c0b090" stroke-width="1.8"/><path d="M88.5 3 L88.5 23" stroke="#808080"/><path d="M89.5 3 L89.5 23" stroke="#fff"/><circle cx="107" cy="13" r="9.5" fill="#fff" stroke="#1a4a8a" stroke-width="2.2"/><path d="M103.5 10 C103.5 6 110.5 6 110.5 10 C110.5 12.5 107 12.5 107 15" fill="none" stroke="#000" stroke-width="2"/><circle cx="107" cy="18.5" r="1.3" fill="#000"/></svg>
<div class="abs" style="left:124px;top:6px;font-size:13px;line-height:14px;white-space:nowrap;letter-spacing:-0.05px">Select objects. Shift to extend select. Drag mouse to select multiple.</div>
<div class="abs" style="left:1574px;top:3px;width:2px;height:20px;border-left:1px solid #808080;border-right:1px solid #fff"></div>
<div class="abs" style="left:1625px;top:6px;font-size:12px;line-height:14px">Measurements</div>
<div class="abs" style="left:1714px;top:2px;width:206px;height:24px;border-top:1px solid #808080;border-left:1px solid #808080;background:#d4d0c8"></div>
</div>
</div>
</body></html>
